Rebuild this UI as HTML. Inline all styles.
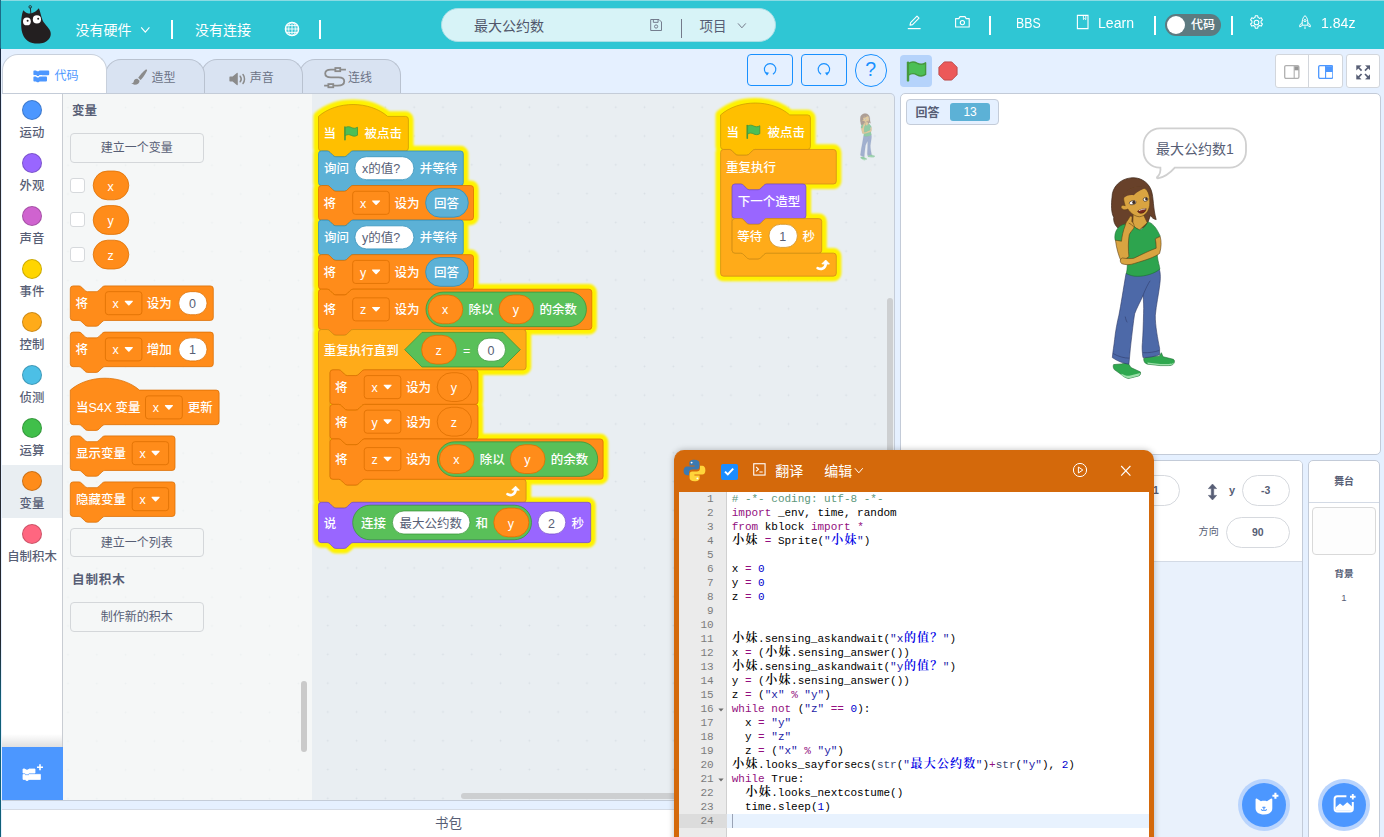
<!DOCTYPE html>
<html lang="zh-CN"><head><meta charset="utf-8"><title>最大公约数</title>
<style>
*{box-sizing:border-box;margin:0;padding:0}
html,body{width:1384px;height:837px;overflow:hidden}
body{position:relative;background:#e5f0ff;font-family:"Liberation Sans","Noto Sans CJK SC",sans-serif;color:#575e75;font-size:12px}
.abs{position:absolute}
#edge{position:absolute;left:0;top:0;width:1.3px;height:837px;background:linear-gradient(#1c6c88 0,#1c6c88 48px,#1d2c44 49px,#2a2a30 200px,#23262e 640px,#0f5f78 700px,#0f5f78 837px);z-index:50}
#header{position:absolute;left:0;top:0;width:1384px;height:48.7px;background:#2fc6d4;border-top:1px solid #8adbe3}
#header .t{position:absolute;color:#fff;font-size:14px;line-height:20px;white-space:nowrap}
#header .sep{position:absolute;top:16px;width:2px;height:19px;background:#fff}
#title{position:absolute;left:441px;top:7px;width:335px;height:34px;border-radius:17px;background:#d7f3f7;border:1px solid #a9dfe6}
#title .t{color:#575e75}
.tab{position:absolute;height:35px;top:59px;background:#d9e3f2;border:1px solid #b9c2d0;border-bottom:none;border-radius:16px 16px 0 0;color:#6b7285;font-size:12px}
.tab.on{top:54px;height:40px;background:#fff;color:#4c97ff;z-index:3;border-color:#c8d0dc}
.tab span{position:absolute;white-space:nowrap;line-height:16px}
.btn{position:absolute;border:1px solid #1890ff;border-radius:4px}
#cats{position:absolute;left:2px;top:94px;width:61px;height:707px;background:#fff;border-right:1px solid #c9cdd3}
.cat{position:absolute;left:0;width:60px;height:53px}
.cat i{position:absolute;left:20px;top:5.5px;width:20px;height:20px;border-radius:50%;border:1px solid rgba(0,0,0,.2)}
.cat b{position:absolute;left:-10px;width:80px;top:30.7px;text-align:center;font-weight:500;font-size:12.4px;line-height:16px;color:#575e75}
#flyout{position:absolute;left:63px;top:94px;width:249px;height:707px;background:#f5f7f7;
 background-image:radial-gradient(circle,#ecf0f1 0.8px,transparent 1.1px);background-size:28.8px 28.8px;background-position:-9.4px -0.8px}
#wsbg{position:absolute;left:312px;top:94px;width:582px;height:707px;background:#e9eef2;border-radius:0 5px 0 0;
 background-image:radial-gradient(circle,#d8dee4 0.8px,transparent 1.1px);background-size:28.8px 28.8px;background-position:1.4px -1.2px}
#wsframe{position:absolute;left:2px;top:93px;width:893px;height:708px;border:1px solid #c4ccd8;border-left:none;border-radius:0 5px 0 0;pointer-events:none;z-index:4}
.fbtn{position:absolute;left:70px;width:133.5px;height:29.3px;border:1px solid #d4d7da;border-radius:4px;background:#f5f7f7;text-align:center;line-height:29.2px;font-size:12px;color:#575e75}
.chk{position:absolute;left:70px;width:15px;height:15px;border:1px solid #d6d9dc;border-radius:3px;background:#fff}
.fh{position:absolute;left:72px;font-weight:700;font-size:12.5px;color:#575e75;line-height:16px}
#wsarea,#flarea{position:absolute;left:0;top:0;width:1384px;height:837px;pointer-events:none}
#wsarea{z-index:2}#flarea{z-index:2}
#stage{position:absolute;left:899.6px;top:92.8px;width:481.8px;height:361.8px;background:#fff;border:1px solid #c3cbd8;border-radius:5px}
#spr{position:absolute;left:890px;top:460px;width:412.8px;height:400px;background:#e9f1fc;border:1px solid #c3cbd8;border-radius:0 5px 0 0}
#sprtop{position:absolute;left:0;top:0;width:411px;height:101px;background:#fff;border-bottom:1px solid #d3dae5;border-radius:0 4px 0 0}
.inp{position:absolute;height:31.5px;border:1px solid #d6d9de;border-radius:16px;background:#fff;text-align:center;font-weight:700;font-size:10.5px;line-height:28px;color:#575e75}
#stsel{position:absolute;left:1308px;top:460px;width:71.8px;height:400px;background:#fff;border:1px solid #c3cbd8;border-radius:5px 5px 0 0}
.fab{position:absolute;width:52px;height:52px;border-radius:50%;background:#b9d4fd}
.fab i{position:absolute;left:4px;top:4px;width:44px;height:44px;border-radius:50%;background:#4c97ff}
#pack{position:absolute;left:2px;top:809px;width:900px;height:28px;background:#fff;border-top:1px solid #d5dbe5}
#ed{position:absolute;left:673.7px;top:450px;width:480.3px;border-left:0.8px solid #d4690b;height:420px;background:#d4690b;border-radius:10px;box-shadow:0 0 6px rgba(0,0,0,.25);z-index:20}
#edin{position:absolute;left:4.5px;top:42px;width:470px;height:400px;background:#fff;overflow:hidden}
#gut{position:absolute;left:0;top:0;width:47.5px;height:400px;background:#ebebeb;border-right:1px solid #d0d0d0}
.ln{position:absolute;left:0;width:470px;height:14px;font-family:"Liberation Mono","Noto Serif CJK SC",monospace;font-size:11px;line-height:14px;white-space:pre;color:#000}
.ln u{position:absolute;left:0;width:34.5px;text-align:right;text-decoration:none;color:#7b7b7b}
.ln s{position:absolute;left:52.5px;text-decoration:none}
.ln em{font-style:normal;display:inline-block;width:13.2px;text-align:center;font-size:12px;font-weight:600}
.k{color:#930f80}.st{color:#1a1aa6}.n{color:#0000cd}.c{color:#5d977c}.fn{color:#3c4c72}
.st em{color:#0000e6}

</style></head>
<body>
<svg width="0" height="0" style="position:absolute"><defs><filter id="gb" x="-10%" y="-10%" width="120%" height="120%"><feGaussianBlur stdDeviation="1"/></filter></defs></svg>
<div id="header">
<svg class="abs" style="left:18px;top:2.300px" width="36" height="44" viewBox="18 3 36 44">
 <path d="M30.3,7.6 L30.9,14" stroke="#231f20" stroke-width="0.9" fill="none"/>
 <circle cx="30.2" cy="6.9" r="1.3" fill="none" stroke="#231f20" stroke-width="0.8"/>
 <path d="M23.2,10.2 C24.6,11.6 26.2,12.9 28.4,13.4 C31.2,14 34.4,12.6 36.6,10.6 C37.5,9.7 38.3,8.6 38.9,8.2 C40.2,11.5 41,15.5 42.4,19.8 C43.8,23.6 48.2,26.6 50.2,31 C52,35.4 49.6,40.2 44.4,42.4 C39.6,44.2 32.4,44 27.8,41 C23,37.6 21.4,31.6 21.2,26 C21,20.4 21.6,14.6 23.2,10.2 Z" fill="#231f20"/>
 <circle cx="26.9" cy="21.4" r="3.9" fill="#fff"/><circle cx="36.9" cy="19.4" r="4.1" fill="#fff"/>
 <circle cx="27.6" cy="20.8" r="1" fill="#231f20"/><circle cx="38.2" cy="18.7" r="1" fill="#231f20"/>
</svg>
<span class="t" style="left:75.5px;top:19px">没有硬件</span>
<svg class="abs" style="left:140px;top:25px" width="11" height="8" viewBox="0 0 11 8"><path d="M1.2,1.4 L5.3,6.2 L9.4,1.4" stroke="#fff" stroke-width="1.1" fill="none"/></svg>
<i class="sep" style="left:170.7px;top:18.800px"></i>
<span class="t" style="left:195px;top:19px">没有连接</span>
<svg class="abs" style="left:284px;top:20px" width="16" height="16" viewBox="0 0 16 16" fill="none" stroke="#fff" stroke-width="0.9">
 <circle cx="8" cy="8" r="6.7" stroke-width="1.2"/><ellipse cx="8" cy="8" rx="3.3" ry="6.7"/><path d="M8,1.3 V14.7 M1.3,8 H14.7 M2.3,4.6 H13.7 M2.3,11.4 H13.7"/><ellipse cx="8" cy="8" rx="5.4" ry="6.7" stroke-width="0.6"/>
</svg>
<i class="sep" style="left:318.7px;top:18.800px"></i>
<div id="title">
 <span class="t" style="left:32px;top:7px;color:#50566a">最大公约数</span>
 <svg class="abs" style="left:207px;top:9px" width="14.200" height="14.200" viewBox="0 0 15 15" fill="none" stroke="#6e7587" stroke-width="1"><path d="M1.8,1.6 H10.6 L13.2,4.2 V13.2 H1.8 Z"/><path d="M4.6,1.8 V4.6 H9.6 V1.8"/><circle cx="7.5" cy="9" r="1.7"/></svg>
 <i class="abs" style="left:238.5px;top:10px;width:1.5px;height:19px;background:#747a8a"></i>
 <span class="t" style="left:257.5px;top:7.600px;font-size:13.5px">项目</span>
 <svg class="abs" style="left:295px;top:13px" width="10" height="8" viewBox="0 0 10 8"><path d="M1,1.4 L4.9,5.8 L8.8,1.4" stroke="#747a8a" stroke-width="1" fill="none"/></svg>
</div>
<svg class="abs" style="left:906px;top:13px" width="17" height="17" viewBox="0 0 17 17" fill="none" stroke="#fff" stroke-width="1.1"><path d="M4,11.2 L4.6,8.6 L11,2.2 L13,4.2 L6.6,10.6 Z" stroke-linejoin="round"/><path d="M1.8,14.6 H14.6" stroke-width="1.2"/></svg>
<svg class="abs" style="left:954px;top:14px" width="17" height="14" viewBox="0 0 17 14" fill="none" stroke="#fff" stroke-width="1.1"><path d="M1.6,3.6 H4.8 L6,1.6 H11 L12.2,3.6 H15.2 V12 H1.6 Z" stroke-linejoin="round"/><circle cx="8.4" cy="7.6" r="2.1"/></svg>
<i class="sep" style="left:988.5px;top:15px"></i>
<span class="t" style="left:1016.300px;top:11.500px;font-size:15px;transform:scaleX(0.820);transform-origin:0 50%">BBS</span>
<svg class="abs" style="left:1076px;top:13px" width="14" height="16" viewBox="0 0 14 16" fill="none" stroke="#fff" stroke-width="1.1"><path d="M1.4,1.4 H12 V14.6 H1.4 Z"/><path d="M7.4,1.6 V5.6 L8.6,4.6 L9.8,5.6 V1.6" stroke-width="0.9"/></svg>
<span class="t" style="left:1098px;top:11.500px;font-size:15px;transform:scaleX(0.940);transform-origin:0 50%">Learn</span>
<i class="sep" style="left:1153.800px;top:15px"></i>
<div class="abs" style="left:1165px;top:13px;width:56px;height:22px;border-radius:11px;background:#5d7a80">
 <i class="abs" style="left:1.600px;top:1.700px;width:18.600px;height:18.600px;border-radius:50%;background:#fff"></i>
 <span class="t" style="left:26px;top:1px;font-size:12px;font-weight:500">代码</span>
</div>
<i class="sep" style="left:1230.800px;top:15px"></i>
<svg class="abs" style="left:1248px;top:13px" width="17" height="17" viewBox="0 0 24 24" fill="none" stroke="#fff" stroke-width="1.5"><circle cx="12" cy="12" r="3.3"/><path d="M10.3,2.5 h3.4 l0.5,2.6 a7.3,7.3 0 0 1 2,1.15 l2.5,-0.85 l1.7,2.95 l-2,1.75 a7.3,7.3 0 0 1 0,2.3 l2,1.75 l-1.7,2.95 l-2.5,-0.85 a7.3,7.3 0 0 1 -2,1.15 l-0.5,2.6 h-3.4 l-0.5,-2.6 a7.3,7.3 0 0 1 -2,-1.15 l-2.5,0.85 l-1.7,-2.95 l2,-1.75 a7.3,7.3 0 0 1 0,-2.3 l-2,-1.75 l1.7,-2.95 l2.5,0.85 a7.3,7.3 0 0 1 2,-1.15 z" stroke-linejoin="round"/></svg>
<svg class="abs" style="left:1297px;top:13px" width="16" height="17" viewBox="0 0 16 17" fill="none" stroke="#fff" stroke-width="1"><path d="M8,1.6 C10.4,3.6 11.2,6.6 10.8,11.2 H5.2 C4.8,6.6 5.6,3.6 8,1.6 Z" stroke-linejoin="round"/><path d="M5.2,8.4 L2.8,11 V13 L5.4,11.4 M10.8,8.4 L13.2,11 V13 L10.6,11.4" stroke-linejoin="round"/><circle cx="8" cy="6.6" r="1.1"/><path d="M8,12.4 V15" /></svg>
<span class="t" style="left:1320.500px;top:11.500px;font-size:15px;transform:scaleX(0.940);transform-origin:0 50%">1.84z</span>
</div>

<div class="tab" style="left:298.7px;width:102px;z-index:0">
 <svg class="abs" style="left:22px;top:5.5px" width="26.5" height="25.4" viewBox="0 0 25 24" fill="none" stroke="#8b8b8b" stroke-width="1.7"><path d="M2,18.6 H6 M10.6,18.6 H14.6 C19,18.6 21,16.6 21,14.4 C21,12.2 19,10.8 15.6,10.8 H8.4 C5,10.8 3,9.4 3,7.2 C3,5 5,3.4 8.4,3.4 H12.6 M17.2,3.4 H22.6"/><rect x="12.6" y="1.9" width="4.6" height="3" /><rect x="6" y="17.1" width="4.6" height="3"/></svg>
 <span style="left:48.2px;top:10px">连线</span></div>
<div class="tab" style="left:201px;width:101.6px;z-index:1">
 <svg class="abs" style="left:26.8px;top:12px" width="18" height="14" viewBox="0 0 18 14"><path d="M1,4.6 H3.6 L7.8,1 C8.4,0.6 8.8,0.9 8.8,1.5 V12.5 C8.8,13.1 8.4,13.4 7.8,13 L3.6,9.4 H1 C0.6,9.4 0.4,9.2 0.4,8.8 V5.2 C0.4,4.8 0.6,4.6 1,4.6 Z" fill="#8b8b8b"/><path d="M11.2,4.2 C12.4,5.8 12.4,8.2 11.2,9.8 M14,2.6 C16,5 16,9 14,11.4" stroke="#8b8b8b" stroke-width="1.5" fill="none" stroke-linecap="round"/></svg>
 <span style="left:47.8px;top:10px">声音</span></div>
<div class="tab" style="left:104.5px;width:100px;z-index:2">
 <svg class="abs" style="left:25.5px;top:9px" width="17" height="17" viewBox="0 0 17 17"><path d="M14.8,0.6 C15.8,0.2 16.4,1 15.9,2 C13.6,6.4 11.4,9.4 9.6,11 L7.2,8.8 C9,6.4 11.6,3 14.8,0.6 Z" fill="#8b8b8b"/><path d="M6.4,9.8 L8.6,11.8 C8.4,14.4 6.4,15.8 3.8,15.8 C2.4,15.8 1,15.4 0.4,14.6 C2.2,14.2 2.6,13.4 2.8,12.2 C3,10.8 4.6,9.4 6.4,9.8 Z" fill="#8b8b8b"/></svg>
 <span style="left:46px;top:10px">造型</span></div>
<div class="tab on" style="left:1.5px;width:105px">
 <svg class="abs" style="left:30.5px;top:15px" width="17" height="13" viewBox="0 0 17 13"><path d="M1.2,0.4 H3 L4,1.3 H5.6 L6.6,0.4 H15.2 Q16.2,0.4 16.2,1.4 V4.2 Q16.2,5.2 15.2,5.2 H6.6 L5.6,6.1 H4 L3,5.2 H1.2 Q0.4,5.2 0.4,4.2 V1.4 Q0.4,0.4 1.2,0.4 Z M1.2,6.6 H3 L4,7.5 H5.6 L6.6,6.6 H13 Q14,6.6 14,7.6 V10.4 Q14,11.4 13,11.4 H6.6 L5.6,12.3 H4 L3,11.4 H1.2 Q0.4,11.4 0.4,10.4 V7.6 Q0.4,6.6 1.2,6.6 Z" fill="#4c97ff"/><path d="M0.4,5.6 H3 L4,6.5 H5.6 L6.6,5.6 H9" stroke="#fff" stroke-width="0.9" fill="none"/></svg>
 <span style="left:52px;top:12.5px">代码</span></div>
<div class="btn" style="left:747px;top:54px;width:46px;height:32px"><svg class="abs" style="left:14px;top:6.500px" width="16" height="16" viewBox="0 0 16 16" fill="none" stroke="#1890ff" stroke-width="1.100"><path d="M5.300,12.300 A5.700,5.700 0 1 1 10.900,12.300"/><path d="M3.800,10.600 L6.600,10.800 L5,13.200 Z" fill="#1890ff" stroke-width="0.500" stroke-linejoin="round"/></svg></div>
<div class="btn" style="left:801px;top:54px;width:46px;height:32px"><svg class="abs" style="left:14px;top:6.500px" width="16" height="16" viewBox="0 0 16 16" fill="none" stroke="#1890ff" stroke-width="1.100"><path d="M10.700,12.300 A5.700,5.700 0 1 0 5.100,12.300"/><path d="M12.200,10.600 L9.400,10.800 L11,13.200 Z" fill="#1890ff" stroke-width="0.500" stroke-linejoin="round"/></svg></div>
<div class="btn" style="left:854.5px;top:54px;width:32.5px;height:32.5px;border-radius:50%;color:#1890ff;font-size:19.500px;text-align:center;line-height:29.500px">?</div>
<div class="abs" style="left:900px;top:55px;width:32px;height:32px;border-radius:4px;background:#b5d3fb">
 <svg class="abs" style="left:6px;top:6px" width="21" height="21" viewBox="0 0 21 21"><path d="M2,1.6 V19.4" stroke="#45993d" stroke-width="2.4" stroke-linecap="round"/><path d="M2.4,2.6 C5.6,0.4 8.6,0.8 11,2.2 C13.6,3.6 16.4,4 19.6,1.8 V13.4 C16.4,15.6 13.6,15.2 11,13.8 C8.6,12.4 5.6,12 2.4,14.2 Z" fill="#4cbf56" stroke="#45993d" stroke-width="1.4" stroke-linejoin="round"/></svg></div>
<svg class="abs" style="left:938px;top:61px" width="20" height="20" viewBox="0 0 22 22"><path d="M6.9,1 H15.1 L21,6.9 V15.1 L15.1,21 H6.9 L1,15.1 V6.9 Z" fill="#ec5959" stroke="#b84848" stroke-width="1" stroke-linejoin="round"/></svg>
<div class="abs" style="left:1274.700px;top:54px;width:68.600px;height:33.500px;border:1px solid #d2d6dc;border-radius:3px;background:#fff">
 <i class="abs" style="left:32.500px;top:0;width:1px;height:31.500px;background:#d2d6dc"></i>
 <svg class="abs" style="left:8.600px;top:10px" width="15.600" height="14" viewBox="0 0 15.600 14"><rect x="0.700" y="0.700" width="14.200" height="12.600" rx="1.300" fill="#fff" stroke="#b0b0b0" stroke-width="1.300"/><rect x="10.200" y="1.300" width="4.400" height="4" fill="#959595"/><path d="M10.200,1 V13" stroke="#b0b0b0" stroke-width="1.100"/></svg>
 <svg class="abs" style="left:42.200px;top:10.400px" width="15.600" height="14" viewBox="0 0 15.600 14"><rect x="0.700" y="0.700" width="14.200" height="12.600" rx="1.300" fill="#fff" stroke="#4c97ff" stroke-width="1.300"/><rect x="7.600" y="1.200" width="7" height="5" fill="#4c97ff"/><path d="M7.600,1 V13 M7.600,6.400 H14.600" stroke="#4c97ff" stroke-width="1.100"/></svg>
</div>
<div class="abs" style="left:1346px;top:54px;width:34px;height:33.500px;border:1px solid #d2d6dc;border-radius:3px;background:#fff">
 <svg class="abs" style="left:8.700px;top:10.200px" width="14.600" height="14.600" viewBox="0 0 14.600 14.600" fill="#575e75" stroke="#575e75"><path d="M2,2 L5.600,5.600 M12.600,2 L9,5.600 M2,12.600 L5.600,9 M12.600,12.600 L9,9" fill="none" stroke-width="1.700"/><path d="M0.400,0.400 H5.200 L0.400,5.200 Z M14.200,0.400 H9.400 L14.200,5.200 Z M0.400,14.200 H5.200 L0.400,9.400 Z M14.200,14.200 H9.400 L14.200,9.400 Z" stroke-width="0.300" stroke-linejoin="round"/></svg>
</div>

<div id="edge"></div>
<div id="cats">
<div class="cat" style="top:0.0px"><i style="background:#4c97ff"></i><b>运动</b></div>
<div class="cat" style="top:53.0px"><i style="background:#9966ff"></i><b>外观</b></div>
<div class="cat" style="top:106.0px"><i style="background:#cf63cf"></i><b>声音</b></div>
<div class="cat" style="top:159.0px"><i style="background:#ffd500"></i><b>事件</b></div>
<div class="cat" style="top:212.0px"><i style="background:#ffab19"></i><b>控制</b></div>
<div class="cat" style="top:265.0px"><i style="background:#4cbfe6"></i><b>侦测</b></div>
<div class="cat" style="top:318.0px"><i style="background:#40bf4a"></i><b>运算</b></div>
<div class="cat" style="top:371.0px;background:#e9eef2"><i style="background:#ff8c1a"></i><b>变量</b></div>
<div class="cat" style="top:424.0px"><i style="background:#ff6680"></i><b>自制积木</b></div>
<div class="abs" style="left:0;top:640px;width:60px;height:13px;background:linear-gradient(rgba(0,0,0,0),rgba(0,0,0,.12))"></div>
<div class="abs" style="left:0;top:653px;width:61px;height:54px;background:#4c97ff"><svg class="abs" style="left:18.8px;top:16px" width="24" height="20" viewBox="0 0 24 20"><path d="M2,6 H4 L5,7 H7 L8,6 H14 V10 H8 L7,11 H5 L4,10 H2 Z M2,11.4 H4 L5,12.4 H7 L8,11.4 H19.4 V16.4 H8 L7,17.4 H5 L4,16.4 H2 Z" fill="#fff" stroke="#fff" stroke-width="0.8" stroke-linejoin="round"/><path d="M19,1.2 V7.2 M16,4.2 H22" stroke="#fff" stroke-width="1.6"/></svg></div>
</div>
<div id="flyout"></div>
<div id="wsbg"></div>
<div id="wsframe"></div>
<div class="fh" style="top:102.8px">变量</div>
<div class="fbtn" style="top:133.3px">建立一个变量</div>
<div class="chk" style="top:177.7px"></div>
<div class="chk" style="top:212.29999999999998px"></div>
<div class="chk" style="top:246.89999999999998px"></div>
<div class="fbtn" style="top:527.8px">建立一个列表</div>
<div class="fh" style="top:572px;letter-spacing:0.9px">自制积木</div>
<div class="fbtn" style="top:602.3px">制作新的积木</div>
<div class="abs" style="left:301px;top:681px;width:6px;height:71px;border-radius:3px;background:#cacaca;z-index:3"></div>
<div class="abs" style="left:887px;top:298px;width:6px;height:160px;border-radius:3px;background:#cdcfd1;z-index:3"></div>
<div class="abs" style="left:461px;top:792.5px;width:300px;height:6px;border-radius:3px;background:#cdcfd1;z-index:3"></div>

<div id="wsarea"><svg width="1384" height="837" viewBox="0 0 1384 837" style="position:absolute;left:0;top:0;" font-family='"Liberation Sans","Noto Sans CJK SC",sans-serif'><g fill="#fff200" stroke="#fff200" stroke-width="10.2" stroke-linejoin="round" filter="url(#gb)"><path d="M 318.5,116.4 c 18,-15.84 51.12,-15.84 69.12,0 H 405.52 a 2.88,2.88 0 0 1 2.88,2.88 V 148.08 a 2.88,2.88 0 0 1 -2.88,2.88 H 353.06 c -1.44,0 -2.16,0.72 -2.88,1.44 l -2.88,2.88 c -0.72,0.72 -1.44,1.44 -2.88,1.44 h -8.64 c -1.44,0 -2.16,-0.72 -2.88,-1.44 l -2.88,-2.88 c -0.72,-0.72 -1.44,-1.44 -2.88,-1.44 H 321.38 a 2.88,2.88 0 0 1 -2.88,-2.88 Z"/><path d="M 318.5,153.84 a 2.88,2.88 0 0 1 2.88,-2.88 H 327.14 c 1.44,0 2.16,0.72 2.88,1.44 l 2.88,2.88 c 0.72,0.72 1.44,1.44 2.88,1.44 h 8.64 c 1.44,0 2.16,-0.72 2.88,-1.44 l 2.88,-2.88 c 0.72,-0.72 1.44,-1.44 2.88,-1.44 H 460.42 a 2.88,2.88 0 0 1 2.88,2.88 V 182.64 a 2.88,2.88 0 0 1 -2.88,2.88 H 353.06 c -1.44,0 -2.16,0.72 -2.88,1.44 l -2.88,2.88 c -0.72,0.72 -1.44,1.44 -2.88,1.44 h -8.64 c -1.44,0 -2.16,-0.72 -2.88,-1.44 l -2.88,-2.88 c -0.72,-0.72 -1.44,-1.44 -2.88,-1.44 H 321.38 a 2.88,2.88 0 0 1 -2.88,-2.88 Z"/><path d="M 318.5,188.4 a 2.88,2.88 0 0 1 2.88,-2.88 H 327.14 c 1.44,0 2.16,0.72 2.88,1.44 l 2.88,2.88 c 0.72,0.72 1.44,1.44 2.88,1.44 h 8.64 c 1.44,0 2.16,-0.72 2.88,-1.44 l 2.88,-2.88 c 0.72,-0.72 1.44,-1.44 2.88,-1.44 H 470.62 a 2.88,2.88 0 0 1 2.88,2.88 V 217.2 a 2.88,2.88 0 0 1 -2.88,2.88 H 353.06 c -1.44,0 -2.16,0.72 -2.88,1.44 l -2.88,2.88 c -0.72,0.72 -1.44,1.44 -2.88,1.44 h -8.64 c -1.44,0 -2.16,-0.72 -2.88,-1.44 l -2.88,-2.88 c -0.72,-0.72 -1.44,-1.44 -2.88,-1.44 H 321.38 a 2.88,2.88 0 0 1 -2.88,-2.88 Z"/><path d="M 318.5,222.96 a 2.88,2.88 0 0 1 2.88,-2.88 H 327.14 c 1.44,0 2.16,0.72 2.88,1.44 l 2.88,2.88 c 0.72,0.72 1.44,1.44 2.88,1.44 h 8.64 c 1.44,0 2.16,-0.72 2.88,-1.44 l 2.88,-2.88 c 0.72,-0.72 1.44,-1.44 2.88,-1.44 H 460.42 a 2.88,2.88 0 0 1 2.88,2.88 V 251.76 a 2.88,2.88 0 0 1 -2.88,2.88 H 353.06 c -1.44,0 -2.16,0.72 -2.88,1.44 l -2.88,2.88 c -0.72,0.72 -1.44,1.44 -2.88,1.44 h -8.64 c -1.44,0 -2.16,-0.72 -2.88,-1.44 l -2.88,-2.88 c -0.72,-0.72 -1.44,-1.44 -2.88,-1.44 H 321.38 a 2.88,2.88 0 0 1 -2.88,-2.88 Z"/><path d="M 318.5,257.52 a 2.88,2.88 0 0 1 2.88,-2.88 H 327.14 c 1.44,0 2.16,0.72 2.88,1.44 l 2.88,2.88 c 0.72,0.72 1.44,1.44 2.88,1.44 h 8.64 c 1.44,0 2.16,-0.72 2.88,-1.44 l 2.88,-2.88 c 0.72,-0.72 1.44,-1.44 2.88,-1.44 H 470.62 a 2.88,2.88 0 0 1 2.88,2.88 V 286.32 a 2.88,2.88 0 0 1 -2.88,2.88 H 353.06 c -1.44,0 -2.16,0.72 -2.88,1.44 l -2.88,2.88 c -0.72,0.72 -1.44,1.44 -2.88,1.44 h -8.64 c -1.44,0 -2.16,-0.72 -2.88,-1.44 l -2.88,-2.88 c -0.72,-0.72 -1.44,-1.44 -2.88,-1.44 H 321.38 a 2.88,2.88 0 0 1 -2.88,-2.88 Z"/><path d="M 318.5,292.08 a 2.88,2.88 0 0 1 2.88,-2.88 H 327.14 c 1.44,0 2.16,0.72 2.88,1.44 l 2.88,2.88 c 0.72,0.72 1.44,1.44 2.88,1.44 h 8.64 c 1.44,0 2.16,-0.72 2.88,-1.44 l 2.88,-2.88 c 0.72,-0.72 1.44,-1.44 2.88,-1.44 H 588.92 a 2.88,2.88 0 0 1 2.88,2.88 V 326.64 a 2.88,2.88 0 0 1 -2.88,2.88 H 353.06 c -1.44,0 -2.16,0.72 -2.88,1.44 l -2.88,2.88 c -0.72,0.72 -1.44,1.44 -2.88,1.44 h -8.64 c -1.44,0 -2.16,-0.72 -2.88,-1.44 l -2.88,-2.88 c -0.72,-0.72 -1.44,-1.44 -2.88,-1.44 H 321.38 a 2.88,2.88 0 0 1 -2.88,-2.88 Z"/><path d="M 318.5,332.4 a 2.88,2.88 0 0 1 2.88,-2.88 H 327.14 c 1.44,0 2.16,0.72 2.88,1.44 l 2.88,2.88 c 0.72,0.72 1.44,1.44 2.88,1.44 h 8.64 c 1.44,0 2.16,-0.72 2.88,-1.44 l 2.88,-2.88 c 0.72,-0.72 1.44,-1.44 2.88,-1.44 H 523.22 a 2.88,2.88 0 0 1 2.88,2.88 V 366.96 a 2.88,2.88 0 0 1 -2.88,2.88 H 364.58 c -1.44,0 -2.16,0.72 -2.88,1.44 l -2.88,2.88 c -0.72,0.72 -1.44,1.44 -2.88,1.44 h -8.64 c -1.44,0 -2.16,-0.72 -2.88,-1.44 l -2.88,-2.88 c -0.72,-0.72 -1.44,-1.44 -2.88,-1.44 H 332.9 a 2.88,2.88 0 0 0 -2.88,2.88 V 476.4 a 2.88,2.88 0 0 0 2.88,2.88 H 338.66 c 1.44,0 2.16,0.72 2.88,1.44 l 2.88,2.88 c 0.72,0.72 1.44,1.44 2.88,1.44 h 8.64 c 1.44,0 2.16,-0.72 2.88,-1.44 l 2.88,-2.88 c 0.72,-0.72 1.44,-1.44 2.88,-1.44 H 523.22 a 2.88,2.88 0 0 1 2.88,2.88 V 499.44 a 2.88,2.88 0 0 1 -2.88,2.88 H 353.06 c -1.44,0 -2.16,0.72 -2.88,1.44 l -2.88,2.88 c -0.72,0.72 -1.44,1.44 -2.88,1.44 h -8.64 c -1.44,0 -2.16,-0.72 -2.88,-1.44 l -2.88,-2.88 c -0.72,-0.72 -1.44,-1.44 -2.88,-1.44 H 321.38 a 2.88,2.88 0 0 1 -2.88,-2.88 Z"/><path d="M 330.02,372.72 a 2.88,2.88 0 0 1 2.88,-2.88 H 338.66 c 1.44,0 2.16,0.72 2.88,1.44 l 2.88,2.88 c 0.72,0.72 1.44,1.44 2.88,1.44 h 8.64 c 1.44,0 2.16,-0.72 2.88,-1.44 l 2.88,-2.88 c 0.72,-0.72 1.44,-1.44 2.88,-1.44 H 475.14 a 2.88,2.88 0 0 1 2.88,2.88 V 401.52 a 2.88,2.88 0 0 1 -2.88,2.88 H 364.58 c -1.44,0 -2.16,0.72 -2.88,1.44 l -2.88,2.88 c -0.72,0.72 -1.44,1.44 -2.88,1.44 h -8.64 c -1.44,0 -2.16,-0.72 -2.88,-1.44 l -2.88,-2.88 c -0.72,-0.72 -1.44,-1.44 -2.88,-1.44 H 332.9 a 2.88,2.88 0 0 1 -2.88,-2.88 Z"/><path d="M 330.02,407.28 a 2.88,2.88 0 0 1 2.88,-2.88 H 338.66 c 1.44,0 2.16,0.72 2.88,1.44 l 2.88,2.88 c 0.72,0.72 1.44,1.44 2.88,1.44 h 8.64 c 1.44,0 2.16,-0.72 2.88,-1.44 l 2.88,-2.88 c 0.72,-0.72 1.44,-1.44 2.88,-1.44 H 475.14 a 2.88,2.88 0 0 1 2.88,2.88 V 436.08 a 2.88,2.88 0 0 1 -2.88,2.88 H 364.58 c -1.44,0 -2.16,0.72 -2.88,1.44 l -2.88,2.88 c -0.72,0.72 -1.44,1.44 -2.88,1.44 h -8.64 c -1.44,0 -2.16,-0.72 -2.88,-1.44 l -2.88,-2.88 c -0.72,-0.72 -1.44,-1.44 -2.88,-1.44 H 332.9 a 2.88,2.88 0 0 1 -2.88,-2.88 Z"/><path d="M 330.02,441.84 a 2.88,2.88 0 0 1 2.88,-2.88 H 338.66 c 1.44,0 2.16,0.72 2.88,1.44 l 2.88,2.88 c 0.72,0.72 1.44,1.44 2.88,1.44 h 8.64 c 1.44,0 2.16,-0.72 2.88,-1.44 l 2.88,-2.88 c 0.72,-0.72 1.44,-1.44 2.88,-1.44 H 600.24 a 2.88,2.88 0 0 1 2.88,2.88 V 476.4 a 2.88,2.88 0 0 1 -2.88,2.88 H 364.58 c -1.44,0 -2.16,0.72 -2.88,1.44 l -2.88,2.88 c -0.72,0.72 -1.44,1.44 -2.88,1.44 h -8.64 c -1.44,0 -2.16,-0.72 -2.88,-1.44 l -2.88,-2.88 c -0.72,-0.72 -1.44,-1.44 -2.88,-1.44 H 332.9 a 2.88,2.88 0 0 1 -2.88,-2.88 Z"/><path d="M 318.5,505.2 a 2.88,2.88 0 0 1 2.88,-2.88 H 327.14 c 1.44,0 2.16,0.72 2.88,1.44 l 2.88,2.88 c 0.72,0.72 1.44,1.44 2.88,1.44 h 8.64 c 1.44,0 2.16,-0.72 2.88,-1.44 l 2.88,-2.88 c 0.72,-0.72 1.44,-1.44 2.88,-1.44 H 587.82 a 2.88,2.88 0 0 1 2.88,2.88 V 539.76 a 2.88,2.88 0 0 1 -2.88,2.88 H 353.06 c -1.44,0 -2.16,0.72 -2.88,1.44 l -2.88,2.88 c -0.72,0.72 -1.44,1.44 -2.88,1.44 h -8.64 c -1.44,0 -2.16,-0.72 -2.88,-1.44 l -2.88,-2.88 c -0.72,-0.72 -1.44,-1.44 -2.88,-1.44 H 321.38 a 2.88,2.88 0 0 1 -2.88,-2.88 Z"/><path d="M 720.6,114.9 c 18,-15.84 51.12,-15.84 69.12,0 H 807.52 a 2.88,2.88 0 0 1 2.88,2.88 V 146.58 a 2.88,2.88 0 0 1 -2.88,2.88 H 755.16 c -1.44,0 -2.16,0.72 -2.88,1.44 l -2.88,2.88 c -0.72,0.72 -1.44,1.44 -2.88,1.44 h -8.64 c -1.44,0 -2.16,-0.72 -2.88,-1.44 l -2.88,-2.88 c -0.72,-0.72 -1.44,-1.44 -2.88,-1.44 H 723.48 a 2.88,2.88 0 0 1 -2.88,-2.88 Z"/><path d="M 720.6,152.34 a 2.88,2.88 0 0 1 2.88,-2.88 H 729.24 c 1.44,0 2.16,0.72 2.88,1.44 l 2.88,2.88 c 0.72,0.72 1.44,1.44 2.88,1.44 h 8.64 c 1.44,0 2.16,-0.72 2.88,-1.44 l 2.88,-2.88 c 0.72,-0.72 1.44,-1.44 2.88,-1.44 H 833.42 a 2.88,2.88 0 0 1 2.88,2.88 V 181.14 a 2.88,2.88 0 0 1 -2.88,2.88 H 766.68 c -1.44,0 -2.16,0.72 -2.88,1.44 l -2.88,2.88 c -0.72,0.72 -1.44,1.44 -2.88,1.44 h -8.64 c -1.44,0 -2.16,-0.72 -2.88,-1.44 l -2.88,-2.88 c -0.72,-0.72 -1.44,-1.44 -2.88,-1.44 H 735 a 2.88,2.88 0 0 0 -2.88,2.88 V 250.26 a 2.88,2.88 0 0 0 2.88,2.88 H 740.76 c 1.44,0 2.16,0.72 2.88,1.44 l 2.88,2.88 c 0.72,0.72 1.44,1.44 2.88,1.44 h 8.64 c 1.44,0 2.16,-0.72 2.88,-1.44 l 2.88,-2.88 c 0.72,-0.72 1.44,-1.44 2.88,-1.44 H 833.42 a 2.88,2.88 0 0 1 2.88,2.88 V 273.3 a 2.88,2.88 0 0 1 -2.88,2.88 H 723.48 a 2.88,2.88 0 0 1 -2.88,-2.88 Z"/><path d="M 732.12,186.9 a 2.88,2.88 0 0 1 2.88,-2.88 H 740.76 c 1.44,0 2.16,0.72 2.88,1.44 l 2.88,2.88 c 0.72,0.72 1.44,1.44 2.88,1.44 h 8.64 c 1.44,0 2.16,-0.72 2.88,-1.44 l 2.88,-2.88 c 0.72,-0.72 1.44,-1.44 2.88,-1.44 H 803.04 a 2.88,2.88 0 0 1 2.88,2.88 V 215.7 a 2.88,2.88 0 0 1 -2.88,2.88 H 766.68 c -1.44,0 -2.16,0.72 -2.88,1.44 l -2.88,2.88 c -0.72,0.72 -1.44,1.44 -2.88,1.44 h -8.64 c -1.44,0 -2.16,-0.72 -2.88,-1.44 l -2.88,-2.88 c -0.72,-0.72 -1.44,-1.44 -2.88,-1.44 H 735 a 2.88,2.88 0 0 1 -2.88,-2.88 Z"/><path d="M 732.12,221.46 a 2.88,2.88 0 0 1 2.88,-2.88 H 740.76 c 1.44,0 2.16,0.72 2.88,1.44 l 2.88,2.88 c 0.72,0.72 1.44,1.44 2.88,1.44 h 8.64 c 1.44,0 2.16,-0.72 2.88,-1.44 l 2.88,-2.88 c 0.72,-0.72 1.44,-1.44 2.88,-1.44 H 818.84 a 2.88,2.88 0 0 1 2.88,2.88 V 250.26 a 2.88,2.88 0 0 1 -2.88,2.88 H 766.68 c -1.44,0 -2.16,0.72 -2.88,1.44 l -2.88,2.88 c -0.72,0.72 -1.44,1.44 -2.88,1.44 h -8.64 c -1.44,0 -2.16,-0.72 -2.88,-1.44 l -2.88,-2.88 c -0.72,-0.72 -1.44,-1.44 -2.88,-1.44 H 735 a 2.88,2.88 0 0 1 -2.88,-2.88 Z"/></g><path d="M 318.5,116.4 c 18,-15.84 51.12,-15.84 69.12,0 H 405.52 a 2.88,2.88 0 0 1 2.88,2.88 V 148.08 a 2.88,2.88 0 0 1 -2.88,2.88 H 353.06 c -1.44,0 -2.16,0.72 -2.88,1.44 l -2.88,2.88 c -0.72,0.72 -1.44,1.44 -2.88,1.44 h -8.64 c -1.44,0 -2.16,-0.72 -2.88,-1.44 l -2.88,-2.88 c -0.72,-0.72 -1.44,-1.44 -2.88,-1.44 H 321.38 a 2.88,2.88 0 0 1 -2.88,-2.88 Z" fill="#FFBF00" stroke="#CC9900" stroke-width="0.75"/><text x="323.4" y="134.18" fill="#fff" font-size="12.5" font-weight="500" text-anchor="start" dominant-baseline="central">当</text><g transform="translate(344.1,126.1) scale(0.72)"><path d="M1.2,1.2 V19" stroke="#45993d" stroke-width="2.2" stroke-linecap="round" fill="none"/><path d="M1.6,2.2 C4.5,0.2 7.5,0.6 10,1.9 C12.7,3.2 15.5,3.6 18.6,1.6 V12.6 C15.5,14.6 12.7,14.2 10,12.9 C7.5,11.6 4.5,11.2 1.6,13.2 Z" fill="#4cbf56" stroke="#45993d" stroke-width="1.2" stroke-linejoin="round"/></g><text x="364.6" y="134.18" fill="#fff" font-size="12.5" font-weight="500" text-anchor="start" dominant-baseline="central">被点击</text><path d="M 318.5,153.84 a 2.88,2.88 0 0 1 2.88,-2.88 H 327.14 c 1.44,0 2.16,0.72 2.88,1.44 l 2.88,2.88 c 0.72,0.72 1.44,1.44 2.88,1.44 h 8.64 c 1.44,0 2.16,-0.72 2.88,-1.44 l 2.88,-2.88 c 0.72,-0.72 1.44,-1.44 2.88,-1.44 H 460.42 a 2.88,2.88 0 0 1 2.88,2.88 V 182.64 a 2.88,2.88 0 0 1 -2.88,2.88 H 353.06 c -1.44,0 -2.16,0.72 -2.88,1.44 l -2.88,2.88 c -0.72,0.72 -1.44,1.44 -2.88,1.44 h -8.64 c -1.44,0 -2.16,-0.72 -2.88,-1.44 l -2.88,-2.88 c -0.72,-0.72 -1.44,-1.44 -2.88,-1.44 H 321.38 a 2.88,2.88 0 0 1 -2.88,-2.88 Z" fill="#5CB1D6" stroke="#2E8EB8" stroke-width="0.75"/><text x="323.9" y="169.34" fill="#fff" font-size="12.5" font-weight="500" text-anchor="start" dominant-baseline="central">询问</text><rect x="354.9" y="156.72" width="59" height="23.04" rx="11.52" fill="#fff" stroke="#2E8EB8" stroke-width="0.75"/><text x="362" y="169.34" fill="#575e75" font-size="12.5" font-weight="400" text-anchor="start" dominant-baseline="central">x的值?</text><text x="419.8" y="169.34" fill="#fff" font-size="12.5" font-weight="500" text-anchor="start" dominant-baseline="central">并等待</text><path d="M 318.5,188.4 a 2.88,2.88 0 0 1 2.88,-2.88 H 327.14 c 1.44,0 2.16,0.72 2.88,1.44 l 2.88,2.88 c 0.72,0.72 1.44,1.44 2.88,1.44 h 8.64 c 1.44,0 2.16,-0.72 2.88,-1.44 l 2.88,-2.88 c 0.72,-0.72 1.44,-1.44 2.88,-1.44 H 470.62 a 2.88,2.88 0 0 1 2.88,2.88 V 217.2 a 2.88,2.88 0 0 1 -2.88,2.88 H 353.06 c -1.44,0 -2.16,0.72 -2.88,1.44 l -2.88,2.88 c -0.72,0.72 -1.44,1.44 -2.88,1.44 h -8.64 c -1.44,0 -2.16,-0.72 -2.88,-1.44 l -2.88,-2.88 c -0.72,-0.72 -1.44,-1.44 -2.88,-1.44 H 321.38 a 2.88,2.88 0 0 1 -2.88,-2.88 Z" fill="#FF8C1A" stroke="#DB6E00" stroke-width="0.75"/><text x="323.4" y="203.9" fill="#fff" font-size="12.5" font-weight="500" text-anchor="start" dominant-baseline="central">将</text><rect x="352.7" y="191.28" width="36.6" height="23.04" rx="2.88" fill="#FF8C1A" stroke="#DB6E00" stroke-width="0.75"/><text x="359.9" y="203.9" fill="#fff" font-size="12.5" font-weight="500" text-anchor="start" dominant-baseline="central">x</text><path d="M 372.3,200.4 h 7.6 q 0.5,0.3 0.1,0.9 l -3.3,3.5 q -0.6,0.5 -1.2,0 l -3.3,-3.5 q -0.4,-0.6 0.1,-0.9 z" fill="#fff"/><text x="394.5" y="203.9" fill="#fff" font-size="12.5" font-weight="500" text-anchor="start" dominant-baseline="central">设为</text><rect x="425.6" y="188.4" width="42.7" height="28.8" rx="14.4" fill="#5CB1D6" stroke="#2E8EB8" stroke-width="0.75"/><text x="446.55" y="203.9" fill="#fff" font-size="12.5" font-weight="500" text-anchor="middle" dominant-baseline="central">回答</text><path d="M 318.5,222.96 a 2.88,2.88 0 0 1 2.88,-2.88 H 327.14 c 1.44,0 2.16,0.72 2.88,1.44 l 2.88,2.88 c 0.72,0.72 1.44,1.44 2.88,1.44 h 8.64 c 1.44,0 2.16,-0.72 2.88,-1.44 l 2.88,-2.88 c 0.72,-0.72 1.44,-1.44 2.88,-1.44 H 460.42 a 2.88,2.88 0 0 1 2.88,2.88 V 251.76 a 2.88,2.88 0 0 1 -2.88,2.88 H 353.06 c -1.44,0 -2.16,0.72 -2.88,1.44 l -2.88,2.88 c -0.72,0.72 -1.44,1.44 -2.88,1.44 h -8.64 c -1.44,0 -2.16,-0.72 -2.88,-1.44 l -2.88,-2.88 c -0.72,-0.72 -1.44,-1.44 -2.88,-1.44 H 321.38 a 2.88,2.88 0 0 1 -2.88,-2.88 Z" fill="#5CB1D6" stroke="#2E8EB8" stroke-width="0.75"/><text x="323.9" y="238.46" fill="#fff" font-size="12.5" font-weight="500" text-anchor="start" dominant-baseline="central">询问</text><rect x="354.9" y="225.84" width="59" height="23.04" rx="11.52" fill="#fff" stroke="#2E8EB8" stroke-width="0.75"/><text x="362" y="238.46" fill="#575e75" font-size="12.5" font-weight="400" text-anchor="start" dominant-baseline="central">y的值?</text><text x="419.8" y="238.46" fill="#fff" font-size="12.5" font-weight="500" text-anchor="start" dominant-baseline="central">并等待</text><path d="M 318.5,257.52 a 2.88,2.88 0 0 1 2.88,-2.88 H 327.14 c 1.44,0 2.16,0.72 2.88,1.44 l 2.88,2.88 c 0.72,0.72 1.44,1.44 2.88,1.44 h 8.64 c 1.44,0 2.16,-0.72 2.88,-1.44 l 2.88,-2.88 c 0.72,-0.72 1.44,-1.44 2.88,-1.44 H 470.62 a 2.88,2.88 0 0 1 2.88,2.88 V 286.32 a 2.88,2.88 0 0 1 -2.88,2.88 H 353.06 c -1.44,0 -2.16,0.72 -2.88,1.44 l -2.88,2.88 c -0.72,0.72 -1.44,1.44 -2.88,1.44 h -8.64 c -1.44,0 -2.16,-0.72 -2.88,-1.44 l -2.88,-2.88 c -0.72,-0.72 -1.44,-1.44 -2.88,-1.44 H 321.38 a 2.88,2.88 0 0 1 -2.88,-2.88 Z" fill="#FF8C1A" stroke="#DB6E00" stroke-width="0.75"/><text x="323.4" y="273.02" fill="#fff" font-size="12.5" font-weight="500" text-anchor="start" dominant-baseline="central">将</text><rect x="352.7" y="260.4" width="36.6" height="23.04" rx="2.88" fill="#FF8C1A" stroke="#DB6E00" stroke-width="0.75"/><text x="359.9" y="273.02" fill="#fff" font-size="12.5" font-weight="500" text-anchor="start" dominant-baseline="central">y</text><path d="M 372.3,269.52 h 7.6 q 0.5,0.3 0.1,0.9 l -3.3,3.5 q -0.6,0.5 -1.2,0 l -3.3,-3.5 q -0.4,-0.6 0.1,-0.9 z" fill="#fff"/><text x="394.5" y="273.02" fill="#fff" font-size="12.5" font-weight="500" text-anchor="start" dominant-baseline="central">设为</text><rect x="425.6" y="257.52" width="42.7" height="28.8" rx="14.4" fill="#5CB1D6" stroke="#2E8EB8" stroke-width="0.75"/><text x="446.55" y="273.02" fill="#fff" font-size="12.5" font-weight="500" text-anchor="middle" dominant-baseline="central">回答</text><path d="M 318.5,292.08 a 2.88,2.88 0 0 1 2.88,-2.88 H 327.14 c 1.44,0 2.16,0.72 2.88,1.44 l 2.88,2.88 c 0.72,0.72 1.44,1.44 2.88,1.44 h 8.64 c 1.44,0 2.16,-0.72 2.88,-1.44 l 2.88,-2.88 c 0.72,-0.72 1.44,-1.44 2.88,-1.44 H 588.92 a 2.88,2.88 0 0 1 2.88,2.88 V 326.64 a 2.88,2.88 0 0 1 -2.88,2.88 H 353.06 c -1.44,0 -2.16,0.72 -2.88,1.44 l -2.88,2.88 c -0.72,0.72 -1.44,1.44 -2.88,1.44 h -8.64 c -1.44,0 -2.16,-0.72 -2.88,-1.44 l -2.88,-2.88 c -0.72,-0.72 -1.44,-1.44 -2.88,-1.44 H 321.38 a 2.88,2.88 0 0 1 -2.88,-2.88 Z" fill="#FF8C1A" stroke="#DB6E00" stroke-width="0.75"/><text x="323.4" y="310.46" fill="#fff" font-size="12.5" font-weight="500" text-anchor="start" dominant-baseline="central">将</text><rect x="352.7" y="297.84" width="36.6" height="23.04" rx="2.88" fill="#FF8C1A" stroke="#DB6E00" stroke-width="0.75"/><text x="359.9" y="310.46" fill="#fff" font-size="12.5" font-weight="500" text-anchor="start" dominant-baseline="central">z</text><path d="M 372.3,306.96 h 7.6 q 0.5,0.3 0.1,0.9 l -3.3,3.5 q -0.6,0.5 -1.2,0 l -3.3,-3.5 q -0.4,-0.6 0.1,-0.9 z" fill="#fff"/><text x="394.5" y="310.46" fill="#fff" font-size="12.5" font-weight="500" text-anchor="start" dominant-baseline="central">设为</text><rect x="426" y="292.08" width="160.4" height="34.56" rx="17.28" fill="#59C059" stroke="#389438" stroke-width="0.75"/><rect x="428.1" y="294.96" width="34.7" height="28.8" rx="14.4" fill="#FF8C1A" stroke="#DB6E00" stroke-width="0.75"/><text x="445.05" y="310.46" fill="#fff" font-size="12.5" font-weight="500" text-anchor="middle" dominant-baseline="central">x</text><text x="468.5" y="310.46" fill="#fff" font-size="12.5" font-weight="500" text-anchor="start" dominant-baseline="central">除以</text><rect x="499" y="294.96" width="34.7" height="28.8" rx="14.4" fill="#FF8C1A" stroke="#DB6E00" stroke-width="0.75"/><text x="515.95" y="310.46" fill="#fff" font-size="12.5" font-weight="500" text-anchor="middle" dominant-baseline="central">y</text><text x="539.4" y="310.46" fill="#fff" font-size="12.5" font-weight="500" text-anchor="start" dominant-baseline="central">的余数</text><path d="M 318.5,332.4 a 2.88,2.88 0 0 1 2.88,-2.88 H 327.14 c 1.44,0 2.16,0.72 2.88,1.44 l 2.88,2.88 c 0.72,0.72 1.44,1.44 2.88,1.44 h 8.64 c 1.44,0 2.16,-0.72 2.88,-1.44 l 2.88,-2.88 c 0.72,-0.72 1.44,-1.44 2.88,-1.44 H 523.22 a 2.88,2.88 0 0 1 2.88,2.88 V 366.96 a 2.88,2.88 0 0 1 -2.88,2.88 H 364.58 c -1.44,0 -2.16,0.72 -2.88,1.44 l -2.88,2.88 c -0.72,0.72 -1.44,1.44 -2.88,1.44 h -8.64 c -1.44,0 -2.16,-0.72 -2.88,-1.44 l -2.88,-2.88 c -0.72,-0.72 -1.44,-1.44 -2.88,-1.44 H 332.9 a 2.88,2.88 0 0 0 -2.88,2.88 V 476.4 a 2.88,2.88 0 0 0 2.88,2.88 H 338.66 c 1.44,0 2.16,0.72 2.88,1.44 l 2.88,2.88 c 0.72,0.72 1.44,1.44 2.88,1.44 h 8.64 c 1.44,0 2.16,-0.72 2.88,-1.44 l 2.88,-2.88 c 0.72,-0.72 1.44,-1.44 2.88,-1.44 H 523.22 a 2.88,2.88 0 0 1 2.88,2.88 V 499.44 a 2.88,2.88 0 0 1 -2.88,2.88 H 353.06 c -1.44,0 -2.16,0.72 -2.88,1.44 l -2.88,2.88 c -0.72,0.72 -1.44,1.44 -2.88,1.44 h -8.64 c -1.44,0 -2.16,-0.72 -2.88,-1.44 l -2.88,-2.88 c -0.72,-0.72 -1.44,-1.44 -2.88,-1.44 H 321.38 a 2.88,2.88 0 0 1 -2.88,-2.88 Z" fill="#FFAB19" stroke="#CF8B17" stroke-width="0.75"/><text x="323.7" y="350.78" fill="#fff" font-size="12.5" font-weight="500" text-anchor="start" dominant-baseline="central">重复执行直到</text><path d="M 421.98,332.4 H 503.02 l 17.28,17.28 l -17.28,17.28 H 421.98 l -17.28,-17.28 Z" fill="#59C059" stroke="#389438" stroke-width="0.75"/><rect x="421.6" y="335.28" width="34.7" height="28.8" rx="14.4" fill="#FF8C1A" stroke="#DB6E00" stroke-width="0.75"/><text x="438.55" y="350.78" fill="#fff" font-size="12.5" font-weight="500" text-anchor="middle" dominant-baseline="central">z</text><text x="462.9" y="350.78" fill="#fff" font-size="12.5" font-weight="500" text-anchor="start" dominant-baseline="central">=</text><rect x="477.4" y="338.16" width="28.1" height="23.04" rx="11.52" fill="#fff" stroke="#389438" stroke-width="0.75"/><text x="491.1" y="350.78" fill="#575e75" font-size="12.5" font-weight="400" text-anchor="middle" dominant-baseline="central">0</text><path d="M 330.02,372.72 a 2.88,2.88 0 0 1 2.88,-2.88 H 338.66 c 1.44,0 2.16,0.72 2.88,1.44 l 2.88,2.88 c 0.72,0.72 1.44,1.44 2.88,1.44 h 8.64 c 1.44,0 2.16,-0.72 2.88,-1.44 l 2.88,-2.88 c 0.72,-0.72 1.44,-1.44 2.88,-1.44 H 475.14 a 2.88,2.88 0 0 1 2.88,2.88 V 401.52 a 2.88,2.88 0 0 1 -2.88,2.88 H 364.58 c -1.44,0 -2.16,0.72 -2.88,1.44 l -2.88,2.88 c -0.72,0.72 -1.44,1.44 -2.88,1.44 h -8.64 c -1.44,0 -2.16,-0.72 -2.88,-1.44 l -2.88,-2.88 c -0.72,-0.72 -1.44,-1.44 -2.88,-1.44 H 332.9 a 2.88,2.88 0 0 1 -2.88,-2.88 Z" fill="#FF8C1A" stroke="#DB6E00" stroke-width="0.75"/><text x="334.92" y="388.22" fill="#fff" font-size="12.5" font-weight="500" text-anchor="start" dominant-baseline="central">将</text><rect x="364.22" y="375.6" width="36.6" height="23.04" rx="2.88" fill="#FF8C1A" stroke="#DB6E00" stroke-width="0.75"/><text x="371.42" y="388.22" fill="#fff" font-size="12.5" font-weight="500" text-anchor="start" dominant-baseline="central">x</text><path d="M 383.82,384.72 h 7.6 q 0.5,0.3 0.1,0.9 l -3.3,3.5 q -0.6,0.5 -1.2,0 l -3.3,-3.5 q -0.4,-0.6 0.1,-0.9 z" fill="#fff"/><text x="406.02" y="388.22" fill="#fff" font-size="12.5" font-weight="500" text-anchor="start" dominant-baseline="central">设为</text><rect x="437.2" y="372.72" width="34.3" height="28.8" rx="14.4" fill="#FF8C1A" stroke="#DB6E00" stroke-width="0.75"/><text x="453.95" y="388.22" fill="#fff" font-size="12.5" font-weight="500" text-anchor="middle" dominant-baseline="central">y</text><path d="M 330.02,407.28 a 2.88,2.88 0 0 1 2.88,-2.88 H 338.66 c 1.44,0 2.16,0.72 2.88,1.44 l 2.88,2.88 c 0.72,0.72 1.44,1.44 2.88,1.44 h 8.64 c 1.44,0 2.16,-0.72 2.88,-1.44 l 2.88,-2.88 c 0.72,-0.72 1.44,-1.44 2.88,-1.44 H 475.14 a 2.88,2.88 0 0 1 2.88,2.88 V 436.08 a 2.88,2.88 0 0 1 -2.88,2.88 H 364.58 c -1.44,0 -2.16,0.72 -2.88,1.44 l -2.88,2.88 c -0.72,0.72 -1.44,1.44 -2.88,1.44 h -8.64 c -1.44,0 -2.16,-0.72 -2.88,-1.44 l -2.88,-2.88 c -0.72,-0.72 -1.44,-1.44 -2.88,-1.44 H 332.9 a 2.88,2.88 0 0 1 -2.88,-2.88 Z" fill="#FF8C1A" stroke="#DB6E00" stroke-width="0.75"/><text x="334.92" y="422.78" fill="#fff" font-size="12.5" font-weight="500" text-anchor="start" dominant-baseline="central">将</text><rect x="364.22" y="410.16" width="36.6" height="23.04" rx="2.88" fill="#FF8C1A" stroke="#DB6E00" stroke-width="0.75"/><text x="371.42" y="422.78" fill="#fff" font-size="12.5" font-weight="500" text-anchor="start" dominant-baseline="central">y</text><path d="M 383.82,419.28 h 7.6 q 0.5,0.3 0.1,0.9 l -3.3,3.5 q -0.6,0.5 -1.2,0 l -3.3,-3.5 q -0.4,-0.6 0.1,-0.9 z" fill="#fff"/><text x="406.02" y="422.78" fill="#fff" font-size="12.5" font-weight="500" text-anchor="start" dominant-baseline="central">设为</text><rect x="437.2" y="407.28" width="34.3" height="28.8" rx="14.4" fill="#FF8C1A" stroke="#DB6E00" stroke-width="0.75"/><text x="453.95" y="422.78" fill="#fff" font-size="12.5" font-weight="500" text-anchor="middle" dominant-baseline="central">z</text><path d="M 330.02,441.84 a 2.88,2.88 0 0 1 2.88,-2.88 H 338.66 c 1.44,0 2.16,0.72 2.88,1.44 l 2.88,2.88 c 0.72,0.72 1.44,1.44 2.88,1.44 h 8.64 c 1.44,0 2.16,-0.72 2.88,-1.44 l 2.88,-2.88 c 0.72,-0.72 1.44,-1.44 2.88,-1.44 H 600.24 a 2.88,2.88 0 0 1 2.88,2.88 V 476.4 a 2.88,2.88 0 0 1 -2.88,2.88 H 364.58 c -1.44,0 -2.16,0.72 -2.88,1.44 l -2.88,2.88 c -0.72,0.72 -1.44,1.44 -2.88,1.44 h -8.64 c -1.44,0 -2.16,-0.72 -2.88,-1.44 l -2.88,-2.88 c -0.72,-0.72 -1.44,-1.44 -2.88,-1.44 H 332.9 a 2.88,2.88 0 0 1 -2.88,-2.88 Z" fill="#FF8C1A" stroke="#DB6E00" stroke-width="0.75"/><text x="334.92" y="460.22" fill="#fff" font-size="12.5" font-weight="500" text-anchor="start" dominant-baseline="central">将</text><rect x="364.22" y="447.6" width="36.6" height="23.04" rx="2.88" fill="#FF8C1A" stroke="#DB6E00" stroke-width="0.75"/><text x="371.42" y="460.22" fill="#fff" font-size="12.5" font-weight="500" text-anchor="start" dominant-baseline="central">z</text><path d="M 383.82,456.72 h 7.6 q 0.5,0.3 0.1,0.9 l -3.3,3.5 q -0.6,0.5 -1.2,0 l -3.3,-3.5 q -0.4,-0.6 0.1,-0.9 z" fill="#fff"/><text x="406.02" y="460.22" fill="#fff" font-size="12.5" font-weight="500" text-anchor="start" dominant-baseline="central">设为</text><rect x="437.3" y="441.84" width="160.4" height="34.56" rx="17.28" fill="#59C059" stroke="#389438" stroke-width="0.75"/><rect x="439.4" y="444.72" width="34.7" height="28.8" rx="14.4" fill="#FF8C1A" stroke="#DB6E00" stroke-width="0.75"/><text x="456.35" y="460.22" fill="#fff" font-size="12.5" font-weight="500" text-anchor="middle" dominant-baseline="central">x</text><text x="479.8" y="460.22" fill="#fff" font-size="12.5" font-weight="500" text-anchor="start" dominant-baseline="central">除以</text><rect x="510.3" y="444.72" width="34.7" height="28.8" rx="14.4" fill="#FF8C1A" stroke="#DB6E00" stroke-width="0.75"/><text x="527.25" y="460.22" fill="#fff" font-size="12.5" font-weight="500" text-anchor="middle" dominant-baseline="central">y</text><text x="550.7" y="460.22" fill="#fff" font-size="12.5" font-weight="500" text-anchor="start" dominant-baseline="central">的余数</text><g transform="translate(506.6,485.68)"><path d="M0.9,8.5 C4.2,10.4 8.3,9.2 9.1,4.4" stroke="#fff" stroke-width="2.6" fill="none" stroke-linecap="round"/><path d="M5.2,4.3 L9,0.5 L12.7,4.5 Z" fill="#fff" stroke="#fff" stroke-width="0.9" stroke-linejoin="round"/></g><path d="M 318.5,505.2 a 2.88,2.88 0 0 1 2.88,-2.88 H 327.14 c 1.44,0 2.16,0.72 2.88,1.44 l 2.88,2.88 c 0.72,0.72 1.44,1.44 2.88,1.44 h 8.64 c 1.44,0 2.16,-0.72 2.88,-1.44 l 2.88,-2.88 c 0.72,-0.72 1.44,-1.44 2.88,-1.44 H 587.82 a 2.88,2.88 0 0 1 2.88,2.88 V 539.76 a 2.88,2.88 0 0 1 -2.88,2.88 H 353.06 c -1.44,0 -2.16,0.72 -2.88,1.44 l -2.88,2.88 c -0.72,0.72 -1.44,1.44 -2.88,1.44 h -8.64 c -1.44,0 -2.16,-0.72 -2.88,-1.44 l -2.88,-2.88 c -0.72,-0.72 -1.44,-1.44 -2.88,-1.44 H 321.38 a 2.88,2.88 0 0 1 -2.88,-2.88 Z" fill="#9966FF" stroke="#774DCB" stroke-width="0.75"/><text x="323.7" y="523.58" fill="#fff" font-size="12.5" font-weight="500" text-anchor="start" dominant-baseline="central">说</text><rect x="352.7" y="505.2" width="178.8" height="34.56" rx="17.28" fill="#59C059" stroke="#389438" stroke-width="0.75"/><text x="361" y="523.58" fill="#fff" font-size="12.5" font-weight="500" text-anchor="start" dominant-baseline="central">连接</text><rect x="392.4" y="510.96" width="77.6" height="23.04" rx="11.52" fill="#fff" stroke="#389438" stroke-width="0.75"/><text x="399.6" y="523.58" fill="#575e75" font-size="12.5" font-weight="400" text-anchor="start" dominant-baseline="central">最大公约数</text><text x="475.4" y="523.58" fill="#fff" font-size="12.5" font-weight="500" text-anchor="start" dominant-baseline="central">和</text><rect x="493.8" y="508.08" width="35.1" height="28.8" rx="14.4" fill="#FF8C1A" stroke="#DB6E00" stroke-width="0.75"/><text x="510.95" y="523.58" fill="#fff" font-size="12.5" font-weight="500" text-anchor="middle" dominant-baseline="central">y</text><rect x="538" y="510.96" width="27.8" height="23.04" rx="11.52" fill="#fff" stroke="#774DCB" stroke-width="0.75"/><text x="551.5" y="523.58" fill="#575e75" font-size="12.5" font-weight="400" text-anchor="middle" dominant-baseline="central">2</text><text x="571.5" y="523.58" fill="#fff" font-size="12.5" font-weight="500" text-anchor="start" dominant-baseline="central">秒</text><path d="M 720.6,114.9 c 18,-15.84 51.12,-15.84 69.12,0 H 807.52 a 2.88,2.88 0 0 1 2.88,2.88 V 146.58 a 2.88,2.88 0 0 1 -2.88,2.88 H 755.16 c -1.44,0 -2.16,0.72 -2.88,1.44 l -2.88,2.88 c -0.72,0.72 -1.44,1.44 -2.88,1.44 h -8.64 c -1.44,0 -2.16,-0.72 -2.88,-1.44 l -2.88,-2.88 c -0.72,-0.72 -1.44,-1.44 -2.88,-1.44 H 723.48 a 2.88,2.88 0 0 1 -2.88,-2.88 Z" fill="#FFBF00" stroke="#CC9900" stroke-width="0.75"/><text x="726.5" y="132.68" fill="#fff" font-size="12.5" font-weight="500" text-anchor="start" dominant-baseline="central">当</text><g transform="translate(746.4,124.6) scale(0.72)"><path d="M1.2,1.2 V19" stroke="#45993d" stroke-width="2.2" stroke-linecap="round" fill="none"/><path d="M1.6,2.2 C4.5,0.2 7.5,0.6 10,1.9 C12.7,3.2 15.5,3.6 18.6,1.6 V12.6 C15.5,14.6 12.7,14.2 10,12.9 C7.5,11.6 4.5,11.2 1.6,13.2 Z" fill="#4cbf56" stroke="#45993d" stroke-width="1.2" stroke-linejoin="round"/></g><text x="767.4" y="132.68" fill="#fff" font-size="12.5" font-weight="500" text-anchor="start" dominant-baseline="central">被点击</text><path d="M 720.6,152.34 a 2.88,2.88 0 0 1 2.88,-2.88 H 729.24 c 1.44,0 2.16,0.72 2.88,1.44 l 2.88,2.88 c 0.72,0.72 1.44,1.44 2.88,1.44 h 8.64 c 1.44,0 2.16,-0.72 2.88,-1.44 l 2.88,-2.88 c 0.72,-0.72 1.44,-1.44 2.88,-1.44 H 833.42 a 2.88,2.88 0 0 1 2.88,2.88 V 181.14 a 2.88,2.88 0 0 1 -2.88,2.88 H 766.68 c -1.44,0 -2.16,0.72 -2.88,1.44 l -2.88,2.88 c -0.72,0.72 -1.44,1.44 -2.88,1.44 h -8.64 c -1.44,0 -2.16,-0.72 -2.88,-1.44 l -2.88,-2.88 c -0.72,-0.72 -1.44,-1.44 -2.88,-1.44 H 735 a 2.88,2.88 0 0 0 -2.88,2.88 V 250.26 a 2.88,2.88 0 0 0 2.88,2.88 H 740.76 c 1.44,0 2.16,0.72 2.88,1.44 l 2.88,2.88 c 0.72,0.72 1.44,1.44 2.88,1.44 h 8.64 c 1.44,0 2.16,-0.72 2.88,-1.44 l 2.88,-2.88 c 0.72,-0.72 1.44,-1.44 2.88,-1.44 H 833.42 a 2.88,2.88 0 0 1 2.88,2.88 V 273.3 a 2.88,2.88 0 0 1 -2.88,2.88 H 723.48 a 2.88,2.88 0 0 1 -2.88,-2.88 Z" fill="#FFAB19" stroke="#CF8B17" stroke-width="0.75"/><text x="725.9" y="167.84" fill="#fff" font-size="12.5" font-weight="500" text-anchor="start" dominant-baseline="central">重复执行</text><path d="M 732.12,186.9 a 2.88,2.88 0 0 1 2.88,-2.88 H 740.76 c 1.44,0 2.16,0.72 2.88,1.44 l 2.88,2.88 c 0.72,0.72 1.44,1.44 2.88,1.44 h 8.64 c 1.44,0 2.16,-0.72 2.88,-1.44 l 2.88,-2.88 c 0.72,-0.72 1.44,-1.44 2.88,-1.44 H 803.04 a 2.88,2.88 0 0 1 2.88,2.88 V 215.7 a 2.88,2.88 0 0 1 -2.88,2.88 H 766.68 c -1.44,0 -2.16,0.72 -2.88,1.44 l -2.88,2.88 c -0.72,0.72 -1.44,1.44 -2.88,1.44 h -8.64 c -1.44,0 -2.16,-0.72 -2.88,-1.44 l -2.88,-2.88 c -0.72,-0.72 -1.44,-1.44 -2.88,-1.44 H 735 a 2.88,2.88 0 0 1 -2.88,-2.88 Z" fill="#9966FF" stroke="#774DCB" stroke-width="0.75"/><text x="737.7" y="202.4" fill="#fff" font-size="12.5" font-weight="500" text-anchor="start" dominant-baseline="central">下一个造型</text><path d="M 732.12,221.46 a 2.88,2.88 0 0 1 2.88,-2.88 H 740.76 c 1.44,0 2.16,0.72 2.88,1.44 l 2.88,2.88 c 0.72,0.72 1.44,1.44 2.88,1.44 h 8.64 c 1.44,0 2.16,-0.72 2.88,-1.44 l 2.88,-2.88 c 0.72,-0.72 1.44,-1.44 2.88,-1.44 H 818.84 a 2.88,2.88 0 0 1 2.88,2.88 V 250.26 a 2.88,2.88 0 0 1 -2.88,2.88 H 766.68 c -1.44,0 -2.16,0.72 -2.88,1.44 l -2.88,2.88 c -0.72,0.72 -1.44,1.44 -2.88,1.44 h -8.64 c -1.44,0 -2.16,-0.72 -2.88,-1.44 l -2.88,-2.88 c -0.72,-0.72 -1.44,-1.44 -2.88,-1.44 H 735 a 2.88,2.88 0 0 1 -2.88,-2.88 Z" fill="#FFAB19" stroke="#CF8B17" stroke-width="0.75"/><text x="737.2" y="236.96" fill="#fff" font-size="12.5" font-weight="500" text-anchor="start" dominant-baseline="central">等待</text><rect x="769" y="224.34" width="28.4" height="23.04" rx="11.52" fill="#fff" stroke="#CF8B17" stroke-width="0.75"/><text x="782.8" y="236.96" fill="#575e75" font-size="12.5" font-weight="400" text-anchor="middle" dominant-baseline="central">1</text><text x="802.5" y="236.96" fill="#fff" font-size="12.5" font-weight="500" text-anchor="start" dominant-baseline="central">秒</text><g transform="translate(816.7,259.54)"><path d="M0.9,8.5 C4.2,10.4 8.3,9.2 9.1,4.4" stroke="#fff" stroke-width="2.6" fill="none" stroke-linecap="round"/><path d="M5.2,4.3 L9,0.5 L12.7,4.5 Z" fill="#fff" stroke="#fff" stroke-width="0.9" stroke-linejoin="round"/></g></svg></div>
<div id="flarea"><svg width="1384" height="837" viewBox="0 0 1384 837" style="position:absolute;left:0;top:0;" font-family='"Liberation Sans","Noto Sans CJK SC",sans-serif'><rect x="93.2" y="171" width="35.6" height="28.8" rx="14.4" fill="#FF8C1A" stroke="#DB6E00" stroke-width="0.75"/><text x="110.6" y="186.5" fill="#fff" font-size="12.5" font-weight="500" text-anchor="middle" dominant-baseline="central">x</text><rect x="93.2" y="205.6" width="35.6" height="28.8" rx="14.4" fill="#FF8C1A" stroke="#DB6E00" stroke-width="0.75"/><text x="110.6" y="221.1" fill="#fff" font-size="12.5" font-weight="500" text-anchor="middle" dominant-baseline="central">y</text><rect x="93.2" y="240.2" width="35.6" height="28.8" rx="14.4" fill="#FF8C1A" stroke="#DB6E00" stroke-width="0.75"/><text x="110.6" y="255.7" fill="#fff" font-size="12.5" font-weight="500" text-anchor="middle" dominant-baseline="central">z</text><path d="M 70.3,288.78 a 2.88,2.88 0 0 1 2.88,-2.88 H 78.94 c 1.44,0 2.16,0.72 2.88,1.44 l 2.88,2.88 c 0.72,0.72 1.44,1.44 2.88,1.44 h 8.64 c 1.44,0 2.16,-0.72 2.88,-1.44 l 2.88,-2.88 c 0.72,-0.72 1.44,-1.44 2.88,-1.44 H 210.42 a 2.88,2.88 0 0 1 2.88,2.88 V 317.58 a 2.88,2.88 0 0 1 -2.88,2.88 H 104.86 c -1.44,0 -2.16,0.72 -2.88,1.44 l -2.88,2.88 c -0.72,0.72 -1.44,1.44 -2.88,1.44 h -8.64 c -1.44,0 -2.16,-0.72 -2.88,-1.44 l -2.88,-2.88 c -0.72,-0.72 -1.44,-1.44 -2.88,-1.44 H 73.18 a 2.88,2.88 0 0 1 -2.88,-2.88 Z" fill="#FF8C1A" stroke="#DB6E00" stroke-width="0.75"/><text x="75.6" y="304.28" fill="#fff" font-size="12.5" font-weight="500" text-anchor="start" dominant-baseline="central">将</text><rect x="105.4" y="291.66" width="36.5" height="23.04" rx="2.88" fill="#FF8C1A" stroke="#DB6E00" stroke-width="0.75"/><text x="112.6" y="304.28" fill="#fff" font-size="12.5" font-weight="500" text-anchor="start" dominant-baseline="central">x</text><path d="M 125,300.78 h 7.6 q 0.5,0.3 0.1,0.9 l -3.3,3.5 q -0.6,0.5 -1.2,0 l -3.3,-3.5 q -0.4,-0.6 0.1,-0.9 z" fill="#fff"/><text x="146.8" y="304.28" fill="#fff" font-size="12.5" font-weight="500" text-anchor="start" dominant-baseline="central">设为</text><rect x="178.7" y="291.66" width="28.3" height="23.04" rx="11.52" fill="#fff" stroke="#DB6E00" stroke-width="0.75"/><text x="192.5" y="304.28" fill="#575e75" font-size="12.5" font-weight="400" text-anchor="middle" dominant-baseline="central">0</text><path d="M 70.3,334.98 a 2.88,2.88 0 0 1 2.88,-2.88 H 78.94 c 1.44,0 2.16,0.72 2.88,1.44 l 2.88,2.88 c 0.72,0.72 1.44,1.44 2.88,1.44 h 8.64 c 1.44,0 2.16,-0.72 2.88,-1.44 l 2.88,-2.88 c 0.72,-0.72 1.44,-1.44 2.88,-1.44 H 210.42 a 2.88,2.88 0 0 1 2.88,2.88 V 363.78 a 2.88,2.88 0 0 1 -2.88,2.88 H 104.86 c -1.44,0 -2.16,0.72 -2.88,1.44 l -2.88,2.88 c -0.72,0.72 -1.44,1.44 -2.88,1.44 h -8.64 c -1.44,0 -2.16,-0.72 -2.88,-1.44 l -2.88,-2.88 c -0.72,-0.72 -1.44,-1.44 -2.88,-1.44 H 73.18 a 2.88,2.88 0 0 1 -2.88,-2.88 Z" fill="#FF8C1A" stroke="#DB6E00" stroke-width="0.75"/><text x="75.6" y="350.48" fill="#fff" font-size="12.5" font-weight="500" text-anchor="start" dominant-baseline="central">将</text><rect x="105.4" y="337.86" width="36.5" height="23.04" rx="2.88" fill="#FF8C1A" stroke="#DB6E00" stroke-width="0.75"/><text x="112.6" y="350.48" fill="#fff" font-size="12.5" font-weight="500" text-anchor="start" dominant-baseline="central">x</text><path d="M 125,346.98 h 7.6 q 0.5,0.3 0.1,0.9 l -3.3,3.5 q -0.6,0.5 -1.2,0 l -3.3,-3.5 q -0.4,-0.6 0.1,-0.9 z" fill="#fff"/><text x="146.8" y="350.48" fill="#fff" font-size="12.5" font-weight="500" text-anchor="start" dominant-baseline="central">增加</text><rect x="178.7" y="337.86" width="28.3" height="23.04" rx="11.52" fill="#fff" stroke="#DB6E00" stroke-width="0.75"/><text x="192.5" y="350.48" fill="#575e75" font-size="12.5" font-weight="400" text-anchor="middle" dominant-baseline="central">1</text><path d="M 70.3,390.1 c 18,-15.84 51.12,-15.84 69.12,0 H 216.22 a 2.88,2.88 0 0 1 2.88,2.88 V 421.78 a 2.88,2.88 0 0 1 -2.88,2.88 H 104.86 c -1.44,0 -2.16,0.72 -2.88,1.44 l -2.88,2.88 c -0.72,0.72 -1.44,1.44 -2.88,1.44 h -8.64 c -1.44,0 -2.16,-0.72 -2.88,-1.44 l -2.88,-2.88 c -0.72,-0.72 -1.44,-1.44 -2.88,-1.44 H 73.18 a 2.88,2.88 0 0 1 -2.88,-2.88 Z" fill="#FF8C1A" stroke="#DB6E00" stroke-width="0.75"/><text x="76" y="408.48" fill="#fff" font-size="12.5" font-weight="500" text-anchor="start" dominant-baseline="central">当S4X 变量</text><rect x="145.5" y="395.86" width="36.8" height="23.04" rx="2.88" fill="#FF8C1A" stroke="#DB6E00" stroke-width="0.75"/><text x="152.7" y="408.48" fill="#fff" font-size="12.5" font-weight="500" text-anchor="start" dominant-baseline="central">x</text><path d="M 165.1,404.98 h 7.6 q 0.5,0.3 0.1,0.9 l -3.3,3.5 q -0.6,0.5 -1.2,0 l -3.3,-3.5 q -0.4,-0.6 0.1,-0.9 z" fill="#fff"/><text x="187.8" y="408.48" fill="#fff" font-size="12.5" font-weight="500" text-anchor="start" dominant-baseline="central">更新</text><path d="M 70.3,438.78 a 2.88,2.88 0 0 1 2.88,-2.88 H 78.94 c 1.44,0 2.16,0.72 2.88,1.44 l 2.88,2.88 c 0.72,0.72 1.44,1.44 2.88,1.44 h 8.64 c 1.44,0 2.16,-0.72 2.88,-1.44 l 2.88,-2.88 c 0.72,-0.72 1.44,-1.44 2.88,-1.44 H 172.12 a 2.88,2.88 0 0 1 2.88,2.88 V 467.58 a 2.88,2.88 0 0 1 -2.88,2.88 H 104.86 c -1.44,0 -2.16,0.72 -2.88,1.44 l -2.88,2.88 c -0.72,0.72 -1.44,1.44 -2.88,1.44 h -8.64 c -1.44,0 -2.16,-0.72 -2.88,-1.44 l -2.88,-2.88 c -0.72,-0.72 -1.44,-1.44 -2.88,-1.44 H 73.18 a 2.88,2.88 0 0 1 -2.88,-2.88 Z" fill="#FF8C1A" stroke="#DB6E00" stroke-width="0.75"/><text x="76" y="454.28" fill="#fff" font-size="12.5" font-weight="500" text-anchor="start" dominant-baseline="central">显示变量</text><rect x="132.2" y="441.66" width="36.4" height="23.04" rx="2.88" fill="#FF8C1A" stroke="#DB6E00" stroke-width="0.75"/><text x="139.4" y="454.28" fill="#fff" font-size="12.5" font-weight="500" text-anchor="start" dominant-baseline="central">x</text><path d="M 151.8,450.78 h 7.6 q 0.5,0.3 0.1,0.9 l -3.3,3.5 q -0.6,0.5 -1.2,0 l -3.3,-3.5 q -0.4,-0.6 0.1,-0.9 z" fill="#fff"/><path d="M 70.3,484.78 a 2.88,2.88 0 0 1 2.88,-2.88 H 78.94 c 1.44,0 2.16,0.72 2.88,1.44 l 2.88,2.88 c 0.72,0.72 1.44,1.44 2.88,1.44 h 8.64 c 1.44,0 2.16,-0.72 2.88,-1.44 l 2.88,-2.88 c 0.72,-0.72 1.44,-1.44 2.88,-1.44 H 172.12 a 2.88,2.88 0 0 1 2.88,2.88 V 513.58 a 2.88,2.88 0 0 1 -2.88,2.88 H 104.86 c -1.44,0 -2.16,0.72 -2.88,1.44 l -2.88,2.88 c -0.72,0.72 -1.44,1.44 -2.88,1.44 h -8.64 c -1.44,0 -2.16,-0.72 -2.88,-1.44 l -2.88,-2.88 c -0.72,-0.72 -1.44,-1.44 -2.88,-1.44 H 73.18 a 2.88,2.88 0 0 1 -2.88,-2.88 Z" fill="#FF8C1A" stroke="#DB6E00" stroke-width="0.75"/><text x="76" y="500.28" fill="#fff" font-size="12.5" font-weight="500" text-anchor="start" dominant-baseline="central">隐藏变量</text><rect x="132.2" y="487.66" width="36.4" height="23.04" rx="2.88" fill="#FF8C1A" stroke="#DB6E00" stroke-width="0.75"/><text x="139.4" y="500.28" fill="#fff" font-size="12.5" font-weight="500" text-anchor="start" dominant-baseline="central">x</text><path d="M 151.8,496.78 h 7.6 q 0.5,0.3 0.1,0.9 l -3.3,3.5 q -0.6,0.5 -1.2,0 l -3.3,-3.5 q -0.4,-0.6 0.1,-0.9 z" fill="#fff"/></svg></div>
<div id="stage">
 <div class="abs" style="left:5px;top:5.2px;width:93px;height:26px;border:1px solid #c4ccd9;border-radius:4px;background:#e5f0ff">
  <span class="abs" style="left:9px;top:4.6px;font-weight:700;font-size:12px;line-height:16px;color:#575e75">回答</span>
  <span class="abs" style="left:43.5px;top:2.6px;width:40px;height:18.4px;border-radius:3px;background:#5cb1d6;color:#fff;text-align:center;font-size:12px;line-height:18.4px">13</span>
 </div>
</div>
<svg class="abs" style="left:1140px;top:124px" width="112" height="60" viewBox="1140 124 112 60"><path d="M1160,128.4 H1229.6 A16.4,16.4 0 0 1 1246,144.8 V151.2 A16.4,16.4 0 0 1 1229.600,167.6 H1174.8 C1171,172 1165,177 1157.800,178.4 C1157,178.400 1156.600,177.600 1157.200,177 C1160,174.400 1160.800,170.800 1160.400,167.600 H1160 A16.4,16.4 0 0 1 1143.600,151.200 V144.800 A16.4,16.4 0 0 1 1160,128.400 Z" fill="#fff" stroke="#d0d0d0" stroke-width="1.8"/><text x="1195" y="148.600" text-anchor="middle" dominant-baseline="central" font-size="14" fill="#575e75" font-family='"Liberation Sans","Noto Sans CJK SC",sans-serif'>最大公约数1</text></svg>
<svg class="abs" style="left:0;top:0;z-index:3;pointer-events:none" width="1384" height="837" viewBox="0 0 1384 837">
<g transform="translate(1100,265) scale(0.14331)" stroke-linejoin="round">
 <path d="M95,695 L150,690 L192,678 L216,716 L282,746 C286,760 280,770 270,774 L200,792 C180,790 160,776 148,764 L100,730 C92,720 90,704 95,695 Z" fill="#2fa84f" stroke="#1c6a30" stroke-width="4"/>
 <path d="M150,768 C170,784 190,790 204,790 L270,772 C276,768 280,762 281,754 L205,772 C188,774 168,768 150,758 Z" fill="#9adfa8"/>
 <path d="M305,652 L332,640 L414,636 L428,612 L440,640 L512,658 C522,664 522,680 514,688 C508,698 496,702 480,702 L420,702 L332,692 C312,688 304,672 305,652 Z" fill="#2fa84f" stroke="#1c6a30" stroke-width="4"/>
 <path d="M334,690 L420,700 L482,700 C498,700 508,696 514,688 L516,680 C506,688 494,690 480,690 L420,690 L330,680 Z" fill="#9adfa8"/>
 <path d="M182,58 C240,76 340,70 414,28 C424,60 422,100 418,130 C410,200 392,280 386,350 C384,420 404,520 416,582 L416,626 C380,640 340,646 300,646 C294,610 292,570 296,540 C300,480 302,420 304,340 C306,290 304,250 300,212 C280,260 256,300 242,340 C232,400 226,460 212,580 L202,692 C160,688 118,668 86,646 C90,600 98,560 102,520 C108,460 120,400 132,350 C146,280 164,160 182,58 Z" fill="#4d69a8" stroke="#2a3560" stroke-width="4"/>
 <path d="M300,212 C316,170 336,130 350,110 M176,360 C180,380 184,392 190,400 M92,618 C130,640 170,650 204,650 M300,612 C340,614 380,608 414,596" stroke="#2a3560" stroke-width="3.500" fill="none"/>
</g>
<g transform="translate(1100,170) scale(0.14331)" stroke-linejoin="round">
 <path d="M215,55 C275,48 335,80 357,140 C376,195 368,262 392,346 C374,343 360,332 352,316 L322,400 L150,430 L132,412 C108,392 92,362 96,330 C78,300 78,240 84,190 C84,120 140,62 215,55 Z" fill="#68412a" stroke="#3b2416" stroke-width="5"/>
 <path d="M232,300 L228,392 L276,418 L330,368 L302,310 Z" fill="#d9a441" stroke="#5a3c12" stroke-width="4"/>
 <path d="M168,172 C196,132 262,108 308,126 C340,140 352,196 346,248 C340,292 312,322 276,326 C246,326 212,300 194,272 C174,284 150,276 146,258 C150,244 166,244 176,250 C168,222 160,196 168,172 Z" fill="#d9a441" stroke="#5a3c12" stroke-width="4"/>
 <path d="M160,180 C200,120 280,104 318,128 C300,132 262,150 236,176 C212,172 184,176 160,200 Z" fill="#68412a"/>
 <ellipse cx="228" cy="228" rx="24" ry="14" fill="#fff" stroke="#2a1a10" stroke-width="4" transform="rotate(-14 228 228)"/>
 <circle cx="236" cy="226" r="11" fill="#3a2a22"/>
 <ellipse cx="318" cy="205" rx="17" ry="13" fill="#fff" stroke="#2a1a10" stroke-width="4" transform="rotate(-14 318 205)"/>
 <circle cx="324" cy="203" r="9" fill="#3a2a22"/>
 <path d="M262,288 C280,276 304,268 322,270 C320,292 300,304 282,302 C272,300 266,296 262,288 Z" fill="#7c2a1c" stroke="#3b1a10" stroke-width="4"/>
 <path d="M272,284 C288,276 304,272 318,272" stroke="#fff" stroke-width="5" fill="none"/>
 <path d="M132,398 C160,372 200,372 232,386 C244,404 262,416 278,418 C300,412 322,388 334,362 C362,368 392,396 420,462 L386,482 C396,520 404,560 400,600 C404,640 416,668 418,692 C380,722 320,742 260,742 C230,742 204,734 184,722 C196,660 196,600 150,500 L106,490 C98,452 110,420 132,398 Z" fill="#2da44e" stroke="#1c6a30" stroke-width="4"/>
 <path d="M176,388 C180,360 196,352 206,330 C210,318 222,318 224,332 L222,360 C236,370 242,392 236,406 C226,420 210,436 204,452 C196,500 196,560 202,604 L150,642 C130,600 114,545 108,490 L150,497 C152,470 162,420 176,388 Z" fill="#d9a441" stroke="#5a3c12" stroke-width="4"/>
 <path d="M386,480 L420,464 C430,500 428,540 416,582 C380,610 320,628 240,652 C210,664 176,662 152,654 C136,640 140,620 156,614 C184,618 214,620 236,616 C290,590 350,560 392,546 C392,522 390,500 386,480 Z" fill="#d9a441" stroke="#5a3c12" stroke-width="4"/>
 <path d="M200,370 C214,376 226,384 234,396" stroke="#5a3c12" stroke-width="4" fill="none"/>
</g><g opacity="0.46" transform="translate(601.76,72.21) scale(0.2325)">
<g transform="translate(1100,265) scale(0.14331)" stroke-linejoin="round">
 <path d="M95,695 L150,690 L192,678 L216,716 L282,746 C286,760 280,770 270,774 L200,792 C180,790 160,776 148,764 L100,730 C92,720 90,704 95,695 Z" fill="#2fa84f" stroke="#1c6a30" stroke-width="4"/>
 <path d="M150,768 C170,784 190,790 204,790 L270,772 C276,768 280,762 281,754 L205,772 C188,774 168,768 150,758 Z" fill="#9adfa8"/>
 <path d="M305,652 L332,640 L414,636 L428,612 L440,640 L512,658 C522,664 522,680 514,688 C508,698 496,702 480,702 L420,702 L332,692 C312,688 304,672 305,652 Z" fill="#2fa84f" stroke="#1c6a30" stroke-width="4"/>
 <path d="M334,690 L420,700 L482,700 C498,700 508,696 514,688 L516,680 C506,688 494,690 480,690 L420,690 L330,680 Z" fill="#9adfa8"/>
 <path d="M182,58 C240,76 340,70 414,28 C424,60 422,100 418,130 C410,200 392,280 386,350 C384,420 404,520 416,582 L416,626 C380,640 340,646 300,646 C294,610 292,570 296,540 C300,480 302,420 304,340 C306,290 304,250 300,212 C280,260 256,300 242,340 C232,400 226,460 212,580 L202,692 C160,688 118,668 86,646 C90,600 98,560 102,520 C108,460 120,400 132,350 C146,280 164,160 182,58 Z" fill="#4d69a8" stroke="#2a3560" stroke-width="4"/>
 <path d="M300,212 C316,170 336,130 350,110 M176,360 C180,380 184,392 190,400 M92,618 C130,640 170,650 204,650 M300,612 C340,614 380,608 414,596" stroke="#2a3560" stroke-width="3.500" fill="none"/>
</g>
<g transform="translate(1100,170) scale(0.14331)" stroke-linejoin="round">
 <path d="M215,55 C275,48 335,80 357,140 C376,195 368,262 392,346 C374,343 360,332 352,316 L322,400 L150,430 L132,412 C108,392 92,362 96,330 C78,300 78,240 84,190 C84,120 140,62 215,55 Z" fill="#68412a" stroke="#3b2416" stroke-width="5"/>
 <path d="M232,300 L228,392 L276,418 L330,368 L302,310 Z" fill="#d9a441" stroke="#5a3c12" stroke-width="4"/>
 <path d="M168,172 C196,132 262,108 308,126 C340,140 352,196 346,248 C340,292 312,322 276,326 C246,326 212,300 194,272 C174,284 150,276 146,258 C150,244 166,244 176,250 C168,222 160,196 168,172 Z" fill="#d9a441" stroke="#5a3c12" stroke-width="4"/>
 <path d="M160,180 C200,120 280,104 318,128 C300,132 262,150 236,176 C212,172 184,176 160,200 Z" fill="#68412a"/>
 <ellipse cx="228" cy="228" rx="24" ry="14" fill="#fff" stroke="#2a1a10" stroke-width="4" transform="rotate(-14 228 228)"/>
 <circle cx="236" cy="226" r="11" fill="#3a2a22"/>
 <ellipse cx="318" cy="205" rx="17" ry="13" fill="#fff" stroke="#2a1a10" stroke-width="4" transform="rotate(-14 318 205)"/>
 <circle cx="324" cy="203" r="9" fill="#3a2a22"/>
 <path d="M262,288 C280,276 304,268 322,270 C320,292 300,304 282,302 C272,300 266,296 262,288 Z" fill="#7c2a1c" stroke="#3b1a10" stroke-width="4"/>
 <path d="M272,284 C288,276 304,272 318,272" stroke="#fff" stroke-width="5" fill="none"/>
 <path d="M132,398 C160,372 200,372 232,386 C244,404 262,416 278,418 C300,412 322,388 334,362 C362,368 392,396 420,462 L386,482 C396,520 404,560 400,600 C404,640 416,668 418,692 C380,722 320,742 260,742 C230,742 204,734 184,722 C196,660 196,600 150,500 L106,490 C98,452 110,420 132,398 Z" fill="#2da44e" stroke="#1c6a30" stroke-width="4"/>
 <path d="M176,388 C180,360 196,352 206,330 C210,318 222,318 224,332 L222,360 C236,370 242,392 236,406 C226,420 210,436 204,452 C196,500 196,560 202,604 L150,642 C130,600 114,545 108,490 L150,497 C152,470 162,420 176,388 Z" fill="#d9a441" stroke="#5a3c12" stroke-width="4"/>
 <path d="M386,480 L420,464 C430,500 428,540 416,582 C380,610 320,628 240,652 C210,664 176,662 152,654 C136,640 140,620 156,614 C184,618 214,620 236,616 C290,590 350,560 392,546 C392,522 390,500 386,480 Z" fill="#d9a441" stroke="#5a3c12" stroke-width="4"/>
 <path d="M200,370 C214,376 226,384 234,396" stroke="#5a3c12" stroke-width="4" fill="none"/>
</g></g></svg>

<div id="spr"><div id="sprtop">
 <div class="inp" style="left:240.600px;top:13.5px;width:48.500px">1</div>
 <svg class="abs" style="left:316px;top:22px" width="11" height="18" viewBox="0 0 11 18"><path d="M5.500,1 L9.600,5.600 H6.700 V12.400 H9.600 L5.500,17 L1.400,12.400 H4.300 V5.600 H1.400 Z" fill="#575e75" stroke="#575e75" stroke-width="0.6" stroke-linejoin="round"/></svg>
 <span class="abs" style="left:338px;top:21px;font-weight:700;font-size:11px;line-height:16px">y</span>
 <div class="inp" style="left:350.600px;top:13.5px;width:48.200px">-3</div>
 <span class="abs" style="left:307.500px;top:63px;font-size:10px;line-height:16px;letter-spacing:0.3px">方向</span>
 <div class="inp" style="left:334.800px;top:55.500px;width:64px">90</div>
</div></div>
<div id="stsel">
 <span class="abs" style="left:0;top:13px;width:70px;text-align:center;font-weight:700;font-size:9.800px;line-height:16px">舞台</span>
 <i class="abs" style="left:0;top:41px;width:70px;height:1px;background:#d3dae5"></i>
 <div class="abs" style="left:2.600px;top:45.500px;width:64.400px;height:48.500px;border:1px solid #d9d9d9;border-radius:4px;background:#fdfdfd"></div>
 <span class="abs" style="left:0;top:104.500px;width:70px;text-align:center;font-weight:700;font-size:9.600px;line-height:16px">背景</span>
 <span class="abs" style="left:0;top:128.500px;width:70px;text-align:center;font-size:9.500px;line-height:16px">1</span>
</div>
<div class="fab" style="left:1237.800px;top:778.700px"><i></i><svg class="abs" style="left:14px;top:11px" width="29" height="29" viewBox="0 0 26 26"><path d="M3.200,8.400 C3.200,7.600 4,7.400 4.600,7.800 L8,10 C9.600,9.600 11.800,9.600 13.400,10 L16.800,7.800 C17.400,7.400 18.200,7.600 18.200,8.400 V16.400 C18.200,20 15,22 10.700,22 C6.400,22 3.200,20 3.200,16.400 Z" fill="#fff"/><path d="M21,2.400 V7.800 M18.300,5.100 H23.700" stroke="#fff" stroke-width="1.900"/><path d="M9.500,15.400 H11.900 L10.700,16.700 Z" fill="#4c97ff" stroke="#4c97ff" stroke-width="0.800" stroke-linejoin="round"/><path d="M8.400,17.600 C9.300,18.800 10.300,18.600 10.700,17.600 C11.100,18.600 12.100,18.800 13,17.600" stroke="#4c97ff" stroke-width="0.900" fill="none" stroke-linecap="round"/></svg></div>
<div class="fab" style="left:1318px;top:778.700px"><i></i><svg class="abs" style="left:14.300px;top:13.800px" width="27" height="25" viewBox="0 0 27 25"><path d="M14.400,4.200 H5.400 C3.600,4.200 2.600,5.200 2.600,7 V16.800 C2.600,18.600 3.600,19.600 5.400,19.600 H18 C19.800,19.600 20.800,18.600 20.800,16.800 V10" stroke="#fff" stroke-width="2" fill="none"/><path d="M3.600,15.600 L8,11.600 L11,14 L15.200,10.200 L20,14.400 V17.600 C20,18.400 19.400,18.800 18.600,18.800 H5 C4.200,18.800 3.600,18.400 3.600,17.600 Z" fill="#fff"/><path d="M20.800,2 V7.600 M18,4.800 H23.600" stroke="#fff" stroke-width="1.900"/></svg></div>
<div id="pack"><span class="abs" style="left:433px;top:5px;font-size:13.500px;line-height:18px">书包</span></div>

<div id="ed">
<svg class="abs" style="left:8.500px;top:9px" width="23" height="23" viewBox="0 0 23 23"><path d="M11.300,0.800 C7.600,0.800 6.400,2.200 6.400,4 V6.400 H11.600 V7.400 H3.800 C1.800,7.400 0.600,9 0.600,11.800 C0.600,14.600 1.800,16.200 3.800,16.200 H6 V13.400 C6,11.600 7.400,10.400 9.200,10.400 H13.800 C15.400,10.400 16.400,9.400 16.400,7.800 V4 C16.400,2.200 14.800,0.800 11.300,0.800 Z" fill="#3b79b0"/><circle cx="8.600" cy="3.600" r="0.950" fill="#fff"/><path d="M11.700,22.200 C15.400,22.200 16.600,20.800 16.600,19 V16.600 H11.400 V15.600 H19.200 C21.200,15.600 22.400,14 22.400,11.200 C22.400,8.400 21.200,6.800 19.200,6.800 H17 V9.600 C17,11.400 15.600,12.600 13.800,12.600 H9.200 C7.600,12.600 6.600,13.600 6.600,15.200 V19 C6.600,20.800 8.200,22.200 11.700,22.200 Z" fill="#ffd43b"/><circle cx="14.400" cy="19.400" r="0.950" fill="#fff"/></svg>
<div class="abs" style="left:46.500px;top:13.800px;width:16.400px;height:16.400px;background:#1a8cff;border-radius:2px"><svg class="abs" style="left:2px;top:2.500px" width="12" height="11" viewBox="0 0 12 11"><path d="M2,5.600 L4.800,8.400 L10.200,2.600" stroke="#fff" stroke-width="2" fill="none"/></svg></div>
<svg class="abs" style="left:78.800px;top:13.400px" width="12.800" height="12.800" viewBox="0 0 14 14" fill="none" stroke="#fff" stroke-width="1.200"><rect x="0.800" y="0.800" width="12.400" height="12.400"/><path d="M3.400,4.400 L6,6.800 L3.400,9.200 M7,9.800 H10.600"/></svg>
<span class="abs" style="left:100.500px;top:11px;color:#fff;font-size:14px;line-height:20px">翻译</span>
<span class="abs" style="left:149.500px;top:11px;color:#fff;font-size:14px;line-height:20px">编辑</span>
<svg class="abs" style="left:179px;top:17px" width="10" height="8" viewBox="0 0 10 8"><path d="M0.800,1.200 L4.800,5.800 L8.800,1.200" stroke="#fff" stroke-width="1" fill="none"/></svg>
<svg class="abs" style="left:397.500px;top:12px" width="16" height="16" viewBox="0 0 16 16" fill="none" stroke="#fff" stroke-width="1"><circle cx="8" cy="8" r="6.600"/><path d="M6.400,5 L10.800,8 L6.400,11 Z" stroke-linejoin="round"/></svg>
<svg class="abs" style="left:445.500px;top:14.500px" width="12" height="12" viewBox="0 0 12 12"><path d="M1.200,1 L10.400,10.600 M10.400,1 L1.200,10.600" stroke="#fff" stroke-width="1.100"/></svg>
<div id="edin"><div id="gut"></div>
<div class="abs" style="left:0;top:322px;width:47.500px;height:14px;background:#dcdcdc"></div><div class="abs" style="left:48px;top:322px;width:422px;height:14px;background:#e8f2fe"></div><div class="abs" style="left:52.500px;top:322px;width:1px;height:14px;background:#9aa3b5"></div>
<div class="ln" style="top:0px"><u>1</u><s><span class="c"># -*- coding: utf-8 -*-</span></s></div>
<div class="ln" style="top:14px"><u>2</u><s><span class="k">import</span> _env, time, random</s></div>
<div class="ln" style="top:28px"><u>3</u><s><span class="k">from</span> kblock <span class="k">import</span> <span class="k">*</span></s></div>
<div class="ln" style="top:42px"><u>4</u><s><em>小</em><em>妹</em> <span class="k">=</span> Sprite(<span class="st">"<em>小</em><em>妹</em>"</span>)</s></div>
<div class="ln" style="top:56px"><u>5</u><s></s></div>
<div class="ln" style="top:70px"><u>6</u><s>x <span class="k">=</span> <span class="n">0</span></s></div>
<div class="ln" style="top:84px"><u>7</u><s>y <span class="k">=</span> <span class="n">0</span></s></div>
<div class="ln" style="top:98px"><u>8</u><s>z <span class="k">=</span> <span class="n">0</span></s></div>
<div class="ln" style="top:112px"><u>9</u><s></s></div>
<div class="ln" style="top:126px"><u>10</u><s></s></div>
<div class="ln" style="top:140px"><u>11</u><s><em>小</em><em>妹</em>.sensing_askandwait(<span class="st">"x<em>的</em><em>值</em><em>？</em>"</span>)</s></div>
<div class="ln" style="top:154px"><u>12</u><s>x <span class="k">=</span> (<em>小</em><em>妹</em>.sensing_answer())</s></div>
<div class="ln" style="top:168px"><u>13</u><s><em>小</em><em>妹</em>.sensing_askandwait(<span class="st">"y<em>的</em><em>值</em><em>？</em>"</span>)</s></div>
<div class="ln" style="top:182px"><u>14</u><s>y <span class="k">=</span> (<em>小</em><em>妹</em>.sensing_answer())</s></div>
<div class="ln" style="top:196px"><u>15</u><s>z <span class="k">=</span> (<span class="st">"x"</span> <span class="k">%</span> <span class="st">"y"</span>)</s></div>
<div class="ln" style="top:210px"><u>16</u><svg class="abs" style="left:38.500px;top:5.500px" width="6" height="4" viewBox="0 0 6 4"><path d="M0.400,0.400 H5.600 L3,3.600 Z" fill="#6b6b6b"/></svg><s><span class="k">while</span> <span class="k">not</span> (<span class="st">"z"</span> <span class="k">==</span> <span class="n">0</span>):</s></div>
<div class="ln" style="top:224px"><u>17</u><s>  x <span class="k">=</span> <span class="st">"y"</span></s></div>
<div class="ln" style="top:238px"><u>18</u><s>  y <span class="k">=</span> <span class="st">"z"</span></s></div>
<div class="ln" style="top:252px"><u>19</u><s>  z <span class="k">=</span> (<span class="st">"x"</span> <span class="k">%</span> <span class="st">"y"</span>)</s></div>
<div class="ln" style="top:266px"><u>20</u><s><em>小</em><em>妹</em>.looks_sayforsecs(<span class="fn">str</span>(<span class="st">"<em>最</em><em>大</em><em>公</em><em>约</em><em>数</em>"</span>)<span class="k">+</span><span class="fn">str</span>(<span class="st">"y"</span>), <span class="n">2</span>)</s></div>
<div class="ln" style="top:280px"><u>21</u><svg class="abs" style="left:38.500px;top:5.500px" width="6" height="4" viewBox="0 0 6 4"><path d="M0.400,0.400 H5.600 L3,3.600 Z" fill="#6b6b6b"/></svg><s><span class="k">while</span> True:</s></div>
<div class="ln" style="top:294px"><u>22</u><s>  <em>小</em><em>妹</em>.looks_nextcostume()</s></div>
<div class="ln" style="top:308px"><u>23</u><s>  time.sleep(<span class="n">1</span>)</s></div>
<div class="ln" style="top:322px"><u>24</u><s></s></div>
</div></div>

</body></html>
